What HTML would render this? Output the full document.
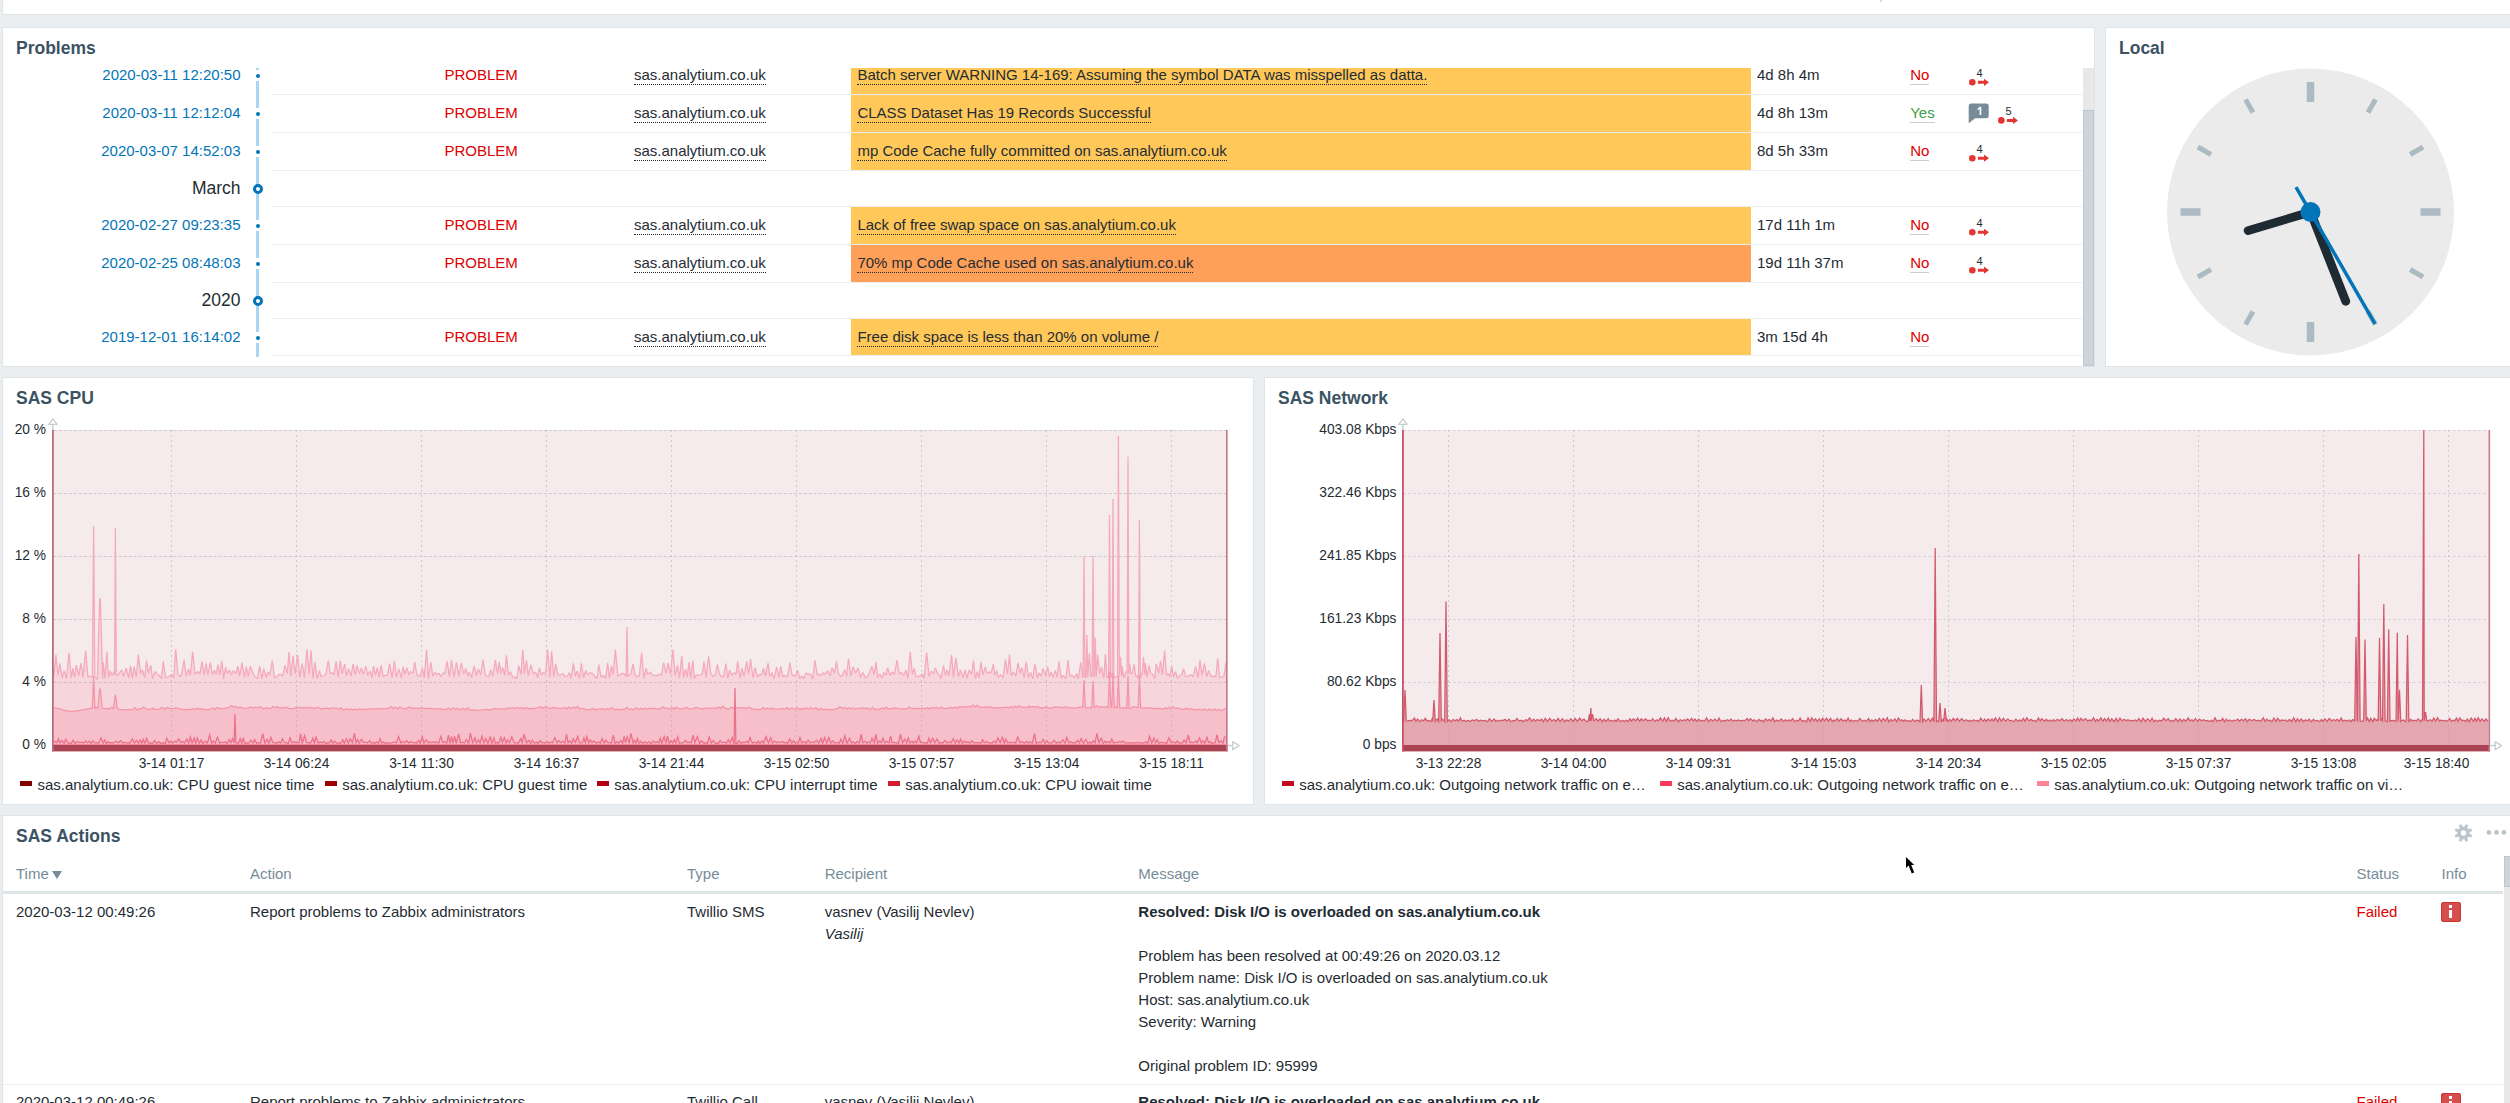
<!DOCTYPE html><html><head><meta charset="utf-8"><style>*{box-sizing:border-box}
html,body{margin:0;padding:0}
body{width:2510px;height:1103px;overflow:hidden;position:relative;background:#ebeef0;font-family:"Liberation Sans", sans-serif;color:#1f2c33;font-size:15px}
.w{position:absolute;background:#fff;border:1px solid #dfe4e7}
.t{position:absolute;white-space:nowrap;line-height:1}
.h{font-weight:bold;color:#3b5363}
.lnk{color:#0275b8}
.red{color:#dc0000}
.dot{border-bottom:1px dotted currentColor;padding-bottom:1px}
.ul{border-bottom:1px solid #c5d0d6;padding-bottom:1px}
svg.abs{position:absolute;left:0;top:0}
</style></head><body>
<div class="w" style="left:2px;top:-20px;width:2600px;height:35px"></div>
<div class="w" style="left:2px;top:27px;width:2093px;height:340px"></div>
<div class="w" style="left:2105px;top:27px;width:500px;height:340px"></div>
<div class="w" style="left:2px;top:377px;width:1252px;height:428px"></div>
<div class="w" style="left:1264px;top:377px;width:1300px;height:428px"></div>
<div class="w" style="left:2px;top:815px;width:2600px;height:400px"></div>
<div class="t h" style="left:16px;top:40.25px;font-size:17.5px;">Problems</div>
<div class="t h" style="left:2119px;top:40.25px;font-size:17.5px;">Local</div>
<div class="t h" style="left:16px;top:390.25px;font-size:17.5px;">SAS CPU</div>
<div class="t h" style="left:1278px;top:390.25px;font-size:17.5px;">SAS Network</div>
<div class="t h" style="left:16px;top:828.25px;font-size:17.5px;">SAS Actions</div>
<div style="position:absolute;left:3px;top:68px;width:2091px;height:298px;overflow:hidden"><div style="position:absolute;left:-3px;top:-68px;width:2510px;height:400px">
<div style="position:absolute;left:256px;top:50px;width:3px;height:307px;background:#a9d6f2;"></div>
<div style="position:absolute;left:271px;top:94px;width:1811px;height:1px;background:#ebeef0;"></div>
<div class="t lnk" style="left:240.5px;top:67px;font-size:15px;transform:translateX(-100%);">2020-03-11 12:20:50</div>
<div style="position:absolute;left:252.5px;top:70.4px;width:11px;height:11px;background:#fff;"></div>
<div style="position:absolute;left:256px;top:73.9px;width:4px;height:4px;background:#0275b8;border-radius:2px"></div>
<div class="t red" style="left:444.5px;top:67px;font-size:15px;">PROBLEM</div>
<div class="t " style="left:634px;top:67px;font-size:15px;"><span class="dot">sas.analytium.co.uk</span></div>
<div style="position:absolute;left:851px;top:57px;width:900px;height:37px;background:#ffc859;"></div>
<div class="t " style="left:857.4px;top:67px;font-size:15px;"><span class="dot">Batch server WARNING 14-169: Assuming the symbol DATA was misspelled as datta.</span></div>
<div class="t " style="left:1757px;top:67px;font-size:15px;">4d 8h 4m</div>
<div class="t " style="left:1910.2px;top:67px;font-size:15px;color:#dc0000"><span class="ul">No</span></div>
<div style="position:absolute;left:271px;top:132px;width:1811px;height:1px;background:#ebeef0;"></div>
<div class="t lnk" style="left:240.5px;top:105px;font-size:15px;transform:translateX(-100%);">2020-03-11 12:12:04</div>
<div style="position:absolute;left:252.5px;top:108.4px;width:11px;height:11px;background:#fff;"></div>
<div style="position:absolute;left:256px;top:111.9px;width:4px;height:4px;background:#0275b8;border-radius:2px"></div>
<div class="t red" style="left:444.5px;top:105px;font-size:15px;">PROBLEM</div>
<div class="t " style="left:634px;top:105px;font-size:15px;"><span class="dot">sas.analytium.co.uk</span></div>
<div style="position:absolute;left:851px;top:95px;width:900px;height:37px;background:#ffc859;"></div>
<div class="t " style="left:857.4px;top:105px;font-size:15px;"><span class="dot">CLASS Dataset Has 19 Records Successful</span></div>
<div class="t " style="left:1757px;top:105px;font-size:15px;">4d 8h 13m</div>
<div class="t " style="left:1910.2px;top:105px;font-size:15px;color:#429e47"><span class="ul">Yes</span></div>
<div style="position:absolute;left:271px;top:170px;width:1811px;height:1px;background:#ebeef0;"></div>
<div class="t lnk" style="left:240.5px;top:143px;font-size:15px;transform:translateX(-100%);">2020-03-07 14:52:03</div>
<div style="position:absolute;left:252.5px;top:146.4px;width:11px;height:11px;background:#fff;"></div>
<div style="position:absolute;left:256px;top:149.9px;width:4px;height:4px;background:#0275b8;border-radius:2px"></div>
<div class="t red" style="left:444.5px;top:143px;font-size:15px;">PROBLEM</div>
<div class="t " style="left:634px;top:143px;font-size:15px;"><span class="dot">sas.analytium.co.uk</span></div>
<div style="position:absolute;left:851px;top:133px;width:900px;height:37px;background:#ffc859;"></div>
<div class="t " style="left:857.4px;top:143px;font-size:15px;"><span class="dot">mp Code Cache fully committed on sas.analytium.co.uk</span></div>
<div class="t " style="left:1757px;top:143px;font-size:15px;">8d 5h 33m</div>
<div class="t " style="left:1910.2px;top:143px;font-size:15px;color:#dc0000"><span class="ul">No</span></div>
<div style="position:absolute;left:271px;top:206px;width:1811px;height:1px;background:#ebeef0;"></div>
<div class="t " style="left:240.5px;top:180.25px;font-size:17.5px;transform:translateX(-100%);">March</div>
<div style="position:absolute;left:253px;top:183.7px;width:10px;height:10px;background:#fff;border:3px solid #0275b8;border-radius:50%"></div>
<div style="position:absolute;left:271px;top:244px;width:1811px;height:1px;background:#ebeef0;"></div>
<div class="t lnk" style="left:240.5px;top:217px;font-size:15px;transform:translateX(-100%);">2020-02-27 09:23:35</div>
<div style="position:absolute;left:252.5px;top:220.4px;width:11px;height:11px;background:#fff;"></div>
<div style="position:absolute;left:256px;top:223.9px;width:4px;height:4px;background:#0275b8;border-radius:2px"></div>
<div class="t red" style="left:444.5px;top:217px;font-size:15px;">PROBLEM</div>
<div class="t " style="left:634px;top:217px;font-size:15px;"><span class="dot">sas.analytium.co.uk</span></div>
<div style="position:absolute;left:851px;top:207px;width:900px;height:37px;background:#ffc859;"></div>
<div class="t " style="left:857.4px;top:217px;font-size:15px;"><span class="dot">Lack of free swap space on sas.analytium.co.uk</span></div>
<div class="t " style="left:1757px;top:217px;font-size:15px;">17d 11h 1m</div>
<div class="t " style="left:1910.2px;top:217px;font-size:15px;color:#dc0000"><span class="ul">No</span></div>
<div style="position:absolute;left:271px;top:282px;width:1811px;height:1px;background:#ebeef0;"></div>
<div class="t lnk" style="left:240.5px;top:255px;font-size:15px;transform:translateX(-100%);">2020-02-25 08:48:03</div>
<div style="position:absolute;left:252.5px;top:258.4px;width:11px;height:11px;background:#fff;"></div>
<div style="position:absolute;left:256px;top:261.9px;width:4px;height:4px;background:#0275b8;border-radius:2px"></div>
<div class="t red" style="left:444.5px;top:255px;font-size:15px;">PROBLEM</div>
<div class="t " style="left:634px;top:255px;font-size:15px;"><span class="dot">sas.analytium.co.uk</span></div>
<div style="position:absolute;left:851px;top:245px;width:900px;height:37px;background:#ffa059;"></div>
<div class="t " style="left:857.4px;top:255px;font-size:15px;"><span class="dot">70% mp Code Cache used on sas.analytium.co.uk</span></div>
<div class="t " style="left:1757px;top:255px;font-size:15px;">19d 11h 37m</div>
<div class="t " style="left:1910.2px;top:255px;font-size:15px;color:#dc0000"><span class="ul">No</span></div>
<div style="position:absolute;left:271px;top:318px;width:1811px;height:1px;background:#ebeef0;"></div>
<div class="t " style="left:240.5px;top:292.25px;font-size:17.5px;transform:translateX(-100%);">2020</div>
<div style="position:absolute;left:253px;top:295.7px;width:10px;height:10px;background:#fff;border:3px solid #0275b8;border-radius:50%"></div>
<div style="position:absolute;left:271px;top:355px;width:1811px;height:1px;background:#ebeef0;"></div>
<div class="t lnk" style="left:240.5px;top:329px;font-size:15px;transform:translateX(-100%);">2019-12-01 16:14:02</div>
<div style="position:absolute;left:252.5px;top:332.4px;width:11px;height:11px;background:#fff;"></div>
<div style="position:absolute;left:256px;top:335.9px;width:4px;height:4px;background:#0275b8;border-radius:2px"></div>
<div class="t red" style="left:444.5px;top:329px;font-size:15px;">PROBLEM</div>
<div class="t " style="left:634px;top:329px;font-size:15px;"><span class="dot">sas.analytium.co.uk</span></div>
<div style="position:absolute;left:851px;top:319px;width:900px;height:36px;background:#ffc859;"></div>
<div class="t " style="left:857.4px;top:329px;font-size:15px;"><span class="dot">Free disk space is less than 20% on volume /</span></div>
<div class="t " style="left:1757px;top:329px;font-size:15px;">3m 15d 4h</div>
<div class="t " style="left:1910.2px;top:329px;font-size:15px;color:#dc0000"><span class="ul">No</span></div>
<svg class="abs" width="2510" height="400">
<circle cx="1972.3" cy="82.3" r="3.3" fill="#e33734"/><path d="M1977.9 80.8 H1984 V78.7 L1989 82.3 L1984 85.9 V83.8 H1977.9 Z" fill="#e33734"/><text x="1979.5" y="76.7" style="font-family:&quot;Liberation Sans&quot;" font-size="11" text-anchor="middle" fill="#1f2c33">4</text>
<path d="M1971.2 103.4 H1986.2 Q1988.7 103.4 1988.7 105.9 V115.7 Q1988.7 118.2 1986.2 118.2 H1975.2 L1968.7 123.2 V105.9 Q1968.7 103.4 1971.2 103.4 Z" fill="#768d99"/><path d="M1979.6 106.7 H1981.3 V114.9 H1979.6 V109 L1977.5 110.3 V108.9 Z" fill="#fff"/>
<circle cx="2001.3" cy="120.4" r="3.3" fill="#e33734"/><path d="M2006.9 118.9 H2013 V116.8 L2018 120.4 L2013 124 V121.9 H2006.9 Z" fill="#e33734"/><text x="2008.5" y="114.8" style="font-family:&quot;Liberation Sans&quot;" font-size="11" text-anchor="middle" fill="#1f2c33">5</text>
<circle cx="1972.3" cy="158.2" r="3.3" fill="#e33734"/><path d="M1977.9 156.7 H1984 V154.6 L1989 158.2 L1984 161.8 V159.7 H1977.9 Z" fill="#e33734"/><text x="1979.5" y="152.6" style="font-family:&quot;Liberation Sans&quot;" font-size="11" text-anchor="middle" fill="#1f2c33">4</text>
<circle cx="1972.3" cy="232.3" r="3.3" fill="#e33734"/><path d="M1977.9 230.8 H1984 V228.7 L1989 232.3 L1984 235.9 V233.8 H1977.9 Z" fill="#e33734"/><text x="1979.5" y="226.7" style="font-family:&quot;Liberation Sans&quot;" font-size="11" text-anchor="middle" fill="#1f2c33">4</text>
<circle cx="1972.3" cy="270.2" r="3.3" fill="#e33734"/><path d="M1977.9 268.7 H1984 V266.6 L1989 270.2 L1984 273.8 V271.7 H1977.9 Z" fill="#e33734"/><text x="1979.5" y="264.6" style="font-family:&quot;Liberation Sans&quot;" font-size="11" text-anchor="middle" fill="#1f2c33">4</text>
</svg>
<div style="position:absolute;left:2083px;top:68px;width:11px;height:300px;background:#e8e8e8;"></div>
<div style="position:absolute;left:2083px;top:110px;width:11px;height:256px;background:#cdd5da;border:1px solid #bdc7cd"></div>
</div></div>
<svg class="abs" width="2510" height="1103">
<circle cx="2310.5" cy="212" r="143.5" fill="#ebebeb"/>
<line x1="2310.5" y1="102" x2="2310.5" y2="82" stroke="#acbbc3" stroke-width="7.5"/>
<line x1="2368" y1="112.41" x2="2375.5" y2="99.42" stroke="#acbbc3" stroke-width="5"/>
<line x1="2410.09" y1="154.5" x2="2423.08" y2="147" stroke="#acbbc3" stroke-width="5"/>
<line x1="2420.5" y1="212" x2="2440.5" y2="212" stroke="#acbbc3" stroke-width="7.5"/>
<line x1="2410.09" y1="269.5" x2="2423.08" y2="277" stroke="#acbbc3" stroke-width="5"/>
<line x1="2368" y1="311.59" x2="2375.5" y2="324.58" stroke="#acbbc3" stroke-width="5"/>
<line x1="2310.5" y1="322" x2="2310.5" y2="342" stroke="#acbbc3" stroke-width="7.5"/>
<line x1="2253" y1="311.59" x2="2245.5" y2="324.58" stroke="#acbbc3" stroke-width="5"/>
<line x1="2210.91" y1="269.5" x2="2197.92" y2="277" stroke="#acbbc3" stroke-width="5"/>
<line x1="2200.5" y1="212" x2="2180.5" y2="212" stroke="#acbbc3" stroke-width="7.5"/>
<line x1="2210.91" y1="154.5" x2="2197.92" y2="147" stroke="#acbbc3" stroke-width="5"/>
<line x1="2253" y1="112.41" x2="2245.5" y2="99.42" stroke="#acbbc3" stroke-width="5"/>
<line x1="2310.5" y1="212" x2="2248.1" y2="230.6" stroke="#1f2b33" stroke-width="8.75" stroke-linecap="round"/>
<line x1="2310.5" y1="212" x2="2345.8" y2="301.3" stroke="#1f2b33" stroke-width="8.75" stroke-linecap="round"/>
<line x1="2296" y1="187.1" x2="2375" y2="323.8" stroke="#0275b8" stroke-width="3.5"/>
<circle cx="2310.5" cy="212" r="10" fill="#0275b8"/>
<rect x="53.8" y="430" width="1172.4" height="315" fill="#f5eaec"/>
<path d="M53.8 745 L53.8 676.29 L55.96 654.88 L58.07 675.48 L59.85 663.33 L62.25 678.44 L64.15 670.52 L66.44 678.75 L69.02 652.81 L71.24 678.06 L72.85 668.46 L74.65 677.55 L76.28 665.04 L78.72 675.89 L80.96 663.04 L83.02 677.33 L85.61 650.76 L87.92 677.11 L89.75 676.44 L92.12 676.6 L92.4 676.6 L93.6 526 L94.8 676.6 L97.01 679 L97.4 679 L98.83 626.35 L99.61 601.24 L100 598 L100.39 601.24 L101.17 626.35 L102.6 679 L103.07 661.99 L104.94 678.48 L106.88 651.66 L108.59 677.52 L110.3 670.62 L112.07 675.64 L114.12 671.14 L114.5 675.3 L115.4 528 L116.3 675.3 L117.57 675.3 L119.44 673.17 L121.84 669.92 L123.65 676.63 L126.11 668.1 L128.7 677.72 L130.55 666.04 L132.45 678.56 L134.14 666.81 L136.34 676.77 L138.39 654.68 L140.57 673.8 L142.35 669.73 L144.77 677.5 L146.56 660.54 L148.36 673.3 L150.84 665.21 L152.54 678.77 L155.1 671.36 L156.96 674.06 L159.16 675.6 L161.48 678.59 L163.31 661.33 L165.52 677.32 L168.04 676.87 L169.91 676.33 L171.57 674.05 L173.74 678.21 L175.7 649.21 L177.96 674.85 L180.14 676.72 L181.76 673.54 L184.06 659.77 L186.3 676.11 L188.63 669.01 L190.3 675.72 L192.64 651.89 L194.95 674.24 L197.46 671.52 L199.96 673.77 L201.98 661.23 L204.15 675.25 L206.13 663.52 L207.81 675.16 L210.41 662.45 L212.4 674.59 L214.58 670.29 L216.26 674.5 L217.89 664.67 L219.72 674.81 L221.82 660.72 L223.67 678.93 L225.57 667.18 L227.34 673.57 L229.6 669.87 L231.53 675 L233.33 670.55 L235.84 673.72 L237.83 666.15 L239.56 676.02 L242 662.6 L244.55 677.34 L246.32 666.52 L248.13 676.52 L250.36 666.16 L252.8 673.11 L254.85 676.75 L257.32 678.75 L259.63 666.22 L262.02 678.89 L263.76 668.78 L266.19 677.58 L267.93 671.97 L269.98 675.22 L272.23 660.37 L274.52 677.8 L276.59 676.91 L278.66 674.71 L280.44 674.23 L282.74 675.88 L284.96 665.46 L287.35 673.56 L289.03 652.05 L290.76 676.28 L292.99 655.86 L295.16 673.72 L297.56 654.9 L299.81 677.77 L302.13 663.23 L304.45 677.72 L306.95 649.25 L309.08 674.26 L311 650.59 L312.95 678.5 L314.99 662.09 L317.08 678.83 L319.49 670.6 L321.26 676.99 L323.65 675.81 L325.77 674.66 L328.21 660.49 L330.3 673.31 L331.99 672.79 L333.88 674.63 L336.11 661.41 L338.27 677.13 L340.26 660.9 L342.06 673.9 L344.63 663.84 L346.43 675.78 L348.54 668.75 L351.11 675.9 L353.11 663.93 L355.2 674.85 L356.86 665.28 L359.42 673.46 L361.29 667.86 L363.32 674.11 L365.82 666.15 L367.62 675.29 L370.14 670.77 L371.76 677.84 L373.59 666.1 L375.55 675.28 L377.25 667.89 L379.36 677.5 L381.16 665.07 L383.14 676.52 L385.26 675.37 L387.5 675.17 L389.63 663.49 L392.08 677.6 L394.42 660.88 L396.34 677.11 L398.86 669.01 L401.35 678.2 L403.19 666.66 L404.89 674.01 L406.91 667.87 L408.91 674.89 L410.53 671.54 L413.04 673.19 L414.75 662.18 L416.86 674.89 L418.65 676.15 L420.28 675.69 L422.4 667.68 L424.18 677.78 L426.62 649.8 L428.32 678.63 L430.87 662.12 L432.8 676.2 L434.91 672.19 L436.53 674.79 L438.97 673.37 L441.31 676.57 L443.1 672.9 L444.72 673.64 L447.12 661.25 L449.35 676.57 L451.55 660.16 L453.95 677.45 L456.47 662 L458.88 676.57 L461.38 662.75 L463.74 674.41 L465.75 668.37 L467.69 676.19 L469.3 671.89 L471.53 677.61 L474.07 665.96 L476.33 675.58 L478.46 669 L480.71 674.79 L483.07 659.75 L485.28 674.57 L487.14 676.6 L488.94 676.75 L490.63 669.75 L492.78 675.95 L495.35 660.04 L497.59 674.14 L499.27 662.17 L500.91 673.42 L502.67 667.48 L504.77 675.33 L506.42 655.37 L508.55 675.41 L510.52 671.76 L512.68 677.3 L514.99 676.89 L516.84 678.74 L518.6 665.49 L521.09 674.51 L522.74 649.61 L524.42 673.57 L526.45 660.24 L528.29 675.86 L530.83 664.78 L533.41 674.1 L535.61 672.01 L537.67 677.78 L539.32 667.88 L541.36 674.99 L543.42 672.34 L545.44 674.33 L547.57 649.52 L549.9 677.57 L551.61 651.37 L553.84 676.84 L555.71 663.92 L557.9 675.2 L560.26 675.01 L562.84 673.51 L565.31 676.51 L567.19 676.45 L569.41 672.67 L571.08 678.48 L573.36 663.32 L575.33 676.13 L577.14 671.04 L579.58 678.55 L581.3 663.39 L583.67 677.72 L585.69 670.52 L587.66 675.08 L590.25 672.61 L592.6 673.48 L594.62 676.22 L597.1 678.53 L598.78 664.64 L601.07 677.21 L603.44 675.29 L605.71 678.51 L607.61 662.75 L609.49 678.14 L611.45 665.7 L613.17 674.74 L615.34 649.66 L617.85 676.37 L620.25 674.46 L622.25 673.39 L624.75 674.11 L626.1 676.82 L627 627 L627.9 676.82 L628.71 675.44 L630.87 674.22 L633.01 663.93 L634.79 674.45 L637.27 676.82 L639.39 675.74 L641.55 652.84 L643.96 678.62 L646.11 668.24 L647.79 674.58 L650.29 671.93 L652.03 674.53 L654.28 675.24 L656.64 675.87 L659.01 674.3 L661.58 674.97 L663.67 662.51 L665.98 673.51 L667.99 663 L670.44 674.16 L672.88 649.46 L675.12 675.86 L677.43 665.21 L679.45 678.12 L681.79 655.87 L683.56 677.77 L685.58 669.24 L687.24 677.15 L688.96 662.02 L690.74 678.63 L692.79 660.82 L694.43 678.35 L696.21 675.12 L698.53 675.43 L700.36 674.75 L702.13 674.45 L704.04 661.65 L706.12 677.44 L708.61 656.24 L710.75 673.26 L712.84 676.6 L715.38 674.19 L717.37 664.36 L719.24 673.06 L721.5 676.91 L723.57 676.77 L725.97 663.55 L727.73 678.06 L729.65 670.05 L731.77 675.18 L734.36 672.72 L736.11 674.38 L737.71 661.38 L740.13 678.51 L742 668.13 L744.08 676.19 L746.64 661.28 L748.54 674.26 L750.56 659 L752.99 677.75 L755.13 667.58 L757.56 677.13 L759.47 674.55 L761.54 674.71 L763.5 668.05 L765.49 676.23 L768.06 663.11 L769.67 676.74 L771.98 672.49 L774.04 678.94 L776.63 667.14 L778.85 677.26 L780.82 666.32 L782.76 676.65 L785.03 675.4 L787.36 677.02 L789.9 662.49 L791.84 674.04 L793.53 676.24 L795.81 674.75 L797.59 670.3 L799.78 678.46 L801.61 676.01 L803.61 678.56 L806.13 672.91 L808.38 674.4 L810.8 674.35 L812.81 678.91 L814.81 660.16 L817.2 675.04 L819.41 674.35 L821.35 675.1 L823.06 672.93 L825.45 674.05 L827.66 670.87 L830.16 675.71 L832.12 667.72 L834.43 673.08 L836.55 661.48 L838.34 673.33 L840.57 676.33 L842.41 675.54 L844.71 669.57 L846.67 676.22 L848.4 658.51 L850.9 675.74 L853.06 666.62 L855.57 673.05 L857.99 667.9 L860.41 677.27 L862.91 672.41 L865.34 677.89 L867.49 676.74 L869.27 673.08 L871.81 666.23 L874.08 674.57 L876.06 661.77 L877.68 677.8 L879.75 673.91 L881.92 677.96 L884.04 672.46 L885.97 675.15 L887.61 667.7 L890.16 675.4 L892.23 672.01 L894.52 674.45 L896.88 660.05 L899.31 673.87 L901.32 672.47 L903.83 675.84 L905.95 669.77 L907.87 678.67 L910.2 651.95 L912.4 674.49 L914.3 668.37 L916.03 676.32 L918.13 676.58 L920.42 675.84 L922.26 673.84 L924.1 678.59 L926.61 652.68 L929.08 676.47 L931.48 671.03 L933.65 673.58 L935.35 667.89 L937.48 673.29 L939.09 674.61 L941.01 678.62 L943.51 665.42 L945.46 675.49 L947.11 669.81 L949.02 676.01 L951.55 654.8 L953.36 677.23 L955.88 657.85 L958.32 676.88 L960.39 669.96 L962.98 677.79 L965.22 669.96 L966.87 678.36 L969.19 669.8 L971.66 674.72 L973.4 660.56 L975.44 678.53 L977.27 671.32 L979.06 677.91 L980.9 661.89 L982.87 675.03 L985.35 666.94 L987.25 673.44 L989.52 671.88 L991.21 673.1 L993.25 664.22 L994.9 675.4 L996.78 670.57 L998.47 677.29 L1000.83 674.77 L1002.97 677.88 L1005.47 659.63 L1007.53 674.5 L1009.52 654.5 L1011.3 675.66 L1013.54 671.73 L1015.92 675.9 L1018.03 662.84 L1020.15 673.29 L1021.92 667.51 L1024.13 677.59 L1026.17 661.92 L1028.56 677.58 L1030.65 672.36 L1032.75 678.79 L1034.95 663.85 L1037.42 677.92 L1039.17 673.03 L1041.21 676.35 L1043.07 668.35 L1045.58 675.59 L1047.72 666.86 L1049.47 677.13 L1051.11 672.03 L1053.24 677.41 L1055.42 670.44 L1057.2 677.47 L1058.96 661.52 L1061.34 678.63 L1063.35 675.27 L1065.92 678.75 L1068.01 660.12 L1069.76 676.27 L1072.1 675.08 L1074.59 678.15 L1076.59 673.6 L1078.26 678.79 L1080.86 662.39 L1082.69 677.48 L1083.1 677.48 L1084 556 L1084.9 677.48 L1086 677.48 L1086.9 635 L1087.8 677.48 L1089.31 653.28 L1090.95 676.58 L1092.1 676.58 L1093 556 L1093.9 676.58 L1094.4 676.58 L1095.3 637.7 L1096.2 676.58 L1097.68 654.91 L1099.68 673.94 L1101.66 667.06 L1103.61 677.9 L1103.9 677.9 L1105.4 654 L1106.9 677.9 L1107.57 676.19 L1108.6 677.9 L1109.5 515 L1110.4 677.9 L1111.76 673.82 L1112.1 677.9 L1113 499 L1113.9 677.9 L1115.85 676.82 L1117.5 676.82 L1118.4 436 L1119.3 676.82 L1120.5 656.7 L1121.7 676.82 L1122.11 666.58 L1124.08 678.08 L1126.61 670.87 L1127.1 673.92 L1128 456.7 L1128.8 673.92 L1129.8 663.5 L1130.8 673.92 L1132.24 673.71 L1134.16 664.33 L1135.82 676.64 L1137.66 675.79 L1138.5 678.81 L1139.4 520 L1140.3 678.81 L1141.77 672.65 L1142.2 674.76 L1143.5 656.7 L1144.8 674.76 L1145.36 663 L1147.11 677.77 L1148.99 665.35 L1150.98 673.8 L1152.8 674.24 L1154.62 678.76 L1156.24 663.91 L1158.65 673.15 L1160.55 660.73 L1162.36 674.86 L1164.63 650.45 L1166.47 675.2 L1168.16 673.86 L1169.82 676.7 L1171.74 666.48 L1173.5 676.59 L1175.58 671.68 L1177.42 678.44 L1179.36 675.79 L1181.54 674.79 L1183.7 668.79 L1185.69 676.81 L1187.35 676.56 L1189.45 675.48 L1191.51 674.97 L1193.14 676.92 L1195.63 666.64 L1197.9 677.88 L1199.97 660.41 L1201.93 675.54 L1204.47 663.35 L1206.69 676.53 L1208.71 670.36 L1211.19 676.71 L1213.7 675.91 L1215.8 677.15 L1217.77 658.35 L1219.56 677.63 L1221.84 676.99 L1223.98 676.64 L1225.82 663.15 L1226.2 663.15 L1226.2 745 Z" fill="#f6d6dc"/>
<path d="M53.8 745 L53.8 708.24 L56.57 708.19 L59.26 708.69 L62.02 709.84 L64.44 710.29 L66.99 710.79 L69.04 711.15 L70.9 711.33 L73.41 711.12 L75.37 710.76 L77.22 711.01 L79.74 710.45 L81.87 709.99 L84.23 709.58 L86.66 709.23 L89.13 708.7 L90.94 708.21 L92.3 708.21 L93.6 676 L94.9 708.21 L95.86 707.27 L97.8 708.4 L99.01 695.79 L99.67 689.78 L100 689 L100.33 689.78 L100.99 695.79 L102.2 708.4 L102.42 708.4 L104.55 708.74 L106.72 708.41 L109.32 708.97 L111.74 707.32 L113.6 708.64 L114.59 700.1 L115.13 696.03 L115.4 695.5 L115.67 696.03 L116.21 700.1 L117.2 708.64 L119.1 709.33 L121.39 709.61 L123.51 710.11 L125.93 709.58 L127.96 709.69 L129.81 709.7 L132.51 709.64 L134.79 707.63 L136.79 709.75 L139.4 708.84 L141.26 708.9 L143.33 707.07 L146 708.94 L148.52 709.02 L150.35 709.41 L152.51 707.9 L154.62 709.36 L157.38 709.43 L159.7 709.18 L161.9 707.35 L164.53 709.15 L167.28 707.48 L169.79 708.39 L172.16 708.55 L174.35 708.28 L176.52 707.68 L178.67 708.77 L180.57 708.84 L183.11 709.33 L185.59 709.69 L187.49 709.94 L189.3 709.24 L191.51 709.55 L193.51 708.45 L195.63 709.73 L197.86 708 L199.88 709.58 L201.95 708.41 L204.7 709.56 L207.49 709.57 L209.93 709.43 L212.34 707.86 L215 709.2 L216.91 707.42 L219.4 708.6 L221.59 708.47 L223.99 708.65 L226.42 707.55 L228.81 707.92 L231.08 705.51 L233.62 706.99 L235.82 706.17 L237.74 708.32 L240.38 707.03 L243.12 708.43 L245.92 708.16 L248.59 707.8 L250.84 706.93 L253.51 707.84 L255.38 707.26 L257.97 707.82 L260.62 706.65 L262.97 708.71 L265.14 708.31 L266.97 707.73 L268.89 708.34 L271.08 708.44 L272.95 706.49 L274.96 707.84 L276.96 706.42 L279.19 708.01 L281.62 707.66 L284.02 708.17 L286.51 707.09 L288.44 708.3 L290.6 708.7 L293.39 708.74 L295.5 707.63 L297.45 707.85 L299.66 707.15 L301.97 708.02 L304 707.11 L306.09 708.06 L308.56 707.43 L311.3 707.74 L313.54 708.31 L315.76 707.84 L317.86 707.22 L320.33 708.69 L323.02 708.52 L325.25 708.27 L327.64 708.04 L329.54 709.1 L331.71 707.64 L334.18 708.31 L336 708 L338.27 708.98 L340.74 708.07 L343.51 710.03 L346.14 708.64 L348.64 709.85 L350.84 708.62 L352.86 709.99 L354.8 709.27 L357.35 709.84 L359.77 708.62 L361.82 709.9 L363.74 708.84 L365.56 709.72 L367.38 708.89 L369.72 709.02 L371.82 708.33 L373.74 709.23 L376.06 708.56 L378.63 709.17 L380.65 708.49 L383.01 708.86 L385.66 708.73 L388.43 708.41 L391.09 706.62 L393.31 708.43 L395.84 707.37 L397.8 708.81 L399.9 706.74 L402.34 708.67 L404.22 708.28 L406.13 708.79 L408.59 707.01 L411.33 708.11 L413.53 707.87 L416.07 708.28 L418.34 708.05 L420.57 708.26 L422.44 707.64 L424.78 708.58 L426.96 708.09 L429.24 708.56 L431.05 708.43 L433.81 709.12 L435.98 708.36 L438.15 709.17 L440.26 708.77 L442.58 709.77 L444.63 709.09 L447.23 708.91 L449.31 707.9 L451.2 709.71 L453.32 708.01 L455.9 709.25 L457.75 708.22 L460.1 709.92 L462.84 708.05 L465.22 709.89 L467.7 707.93 L470.42 710.22 L472.97 709.81 L475.21 710.23 L477.75 710.25 L479.67 710.22 L481.58 709.85 L483.69 709.85 L485.7 709.31 L488.04 709.72 L490.31 709.99 L492.54 709.14 L494.83 708.44 L497.02 709.49 L498.99 708.47 L500.99 709.41 L503.38 708.59 L505.57 708.99 L507.95 707.89 L510.74 708.6 L512.8 707.54 L515.17 708.64 L517.35 707.65 L519.58 708.36 L522.29 707.7 L524.58 708.72 L526.68 707.4 L528.52 708.8 L530.65 708.44 L533.4 708.77 L535.99 707.85 L537.99 707.91 L540.55 706.66 L543.25 708.17 L546 706.63 L548.09 708.38 L550.14 708.16 L552.48 708.09 L554.41 707.45 L556.48 708.18 L559.16 708.39 L561.82 708.67 L564.35 707.51 L566.81 708.97 L568.67 706.82 L570.83 708.67 L573 707.13 L575.74 708.17 L577.77 706.31 L579.68 708.78 L582.39 708.45 L584.75 709.13 L587.42 709.75 L589.89 709.56 L592.67 708.38 L595.33 709.87 L597.66 709.13 L599.98 709.19 L602.49 708.64 L604.77 709.48 L607.55 708.7 L609.48 709.38 L612.22 707.86 L614.97 709.9 L616.79 709.06 L619.18 709.56 L621.91 709.33 L624.23 709.49 L626.9 707.41 L628.73 709.6 L631.05 708.79 L633.6 709.98 L636.2 707.81 L638.83 709.49 L640.65 708.11 L642.71 709.26 L645.18 708.26 L647.22 709.29 L649.27 708.19 L651.85 708.73 L653.91 708.15 L655.97 709.28 L658.07 708.54 L660.6 708.7 L662.48 706.89 L664.52 708.06 L666.69 708.18 L669.4 709.16 L671.99 707.49 L674.13 709.1 L676.52 707.36 L678.8 708.71 L680.98 708.82 L683.69 708.56 L686.45 707.19 L688.6 708.94 L691.34 708.86 L693.28 708.58 L696.03 707.48 L698.2 708.11 L700.07 708.44 L702.22 708.97 L704.14 708 L706.48 708.39 L709.23 708.34 L711.25 708.31 L713.98 707.78 L715.94 708.54 L718.53 706.91 L720.79 708.33 L722.78 706.22 L725.56 708.57 L727.41 708.54 L729.38 708.87 L731.4 706.93 L733.7 708.42 L735 706 L736.3 708.42 L737.36 708.08 L739.63 707.35 L741.75 708.02 L743.96 707.68 L746.22 708.42 L748.96 707.26 L751.64 708.71 L753.73 709.2 L756.25 709.49 L759 709.31 L760.9 709.45 L763.2 707.47 L765.51 709.17 L767.58 708.19 L770.01 709.01 L772.29 707.91 L775.06 709.2 L777.66 709.02 L780.29 709.04 L782.6 708.4 L784.95 709.34 L787.04 707.64 L789.35 709.24 L791.98 707.74 L794.76 709.38 L797.27 707.81 L799.87 709.62 L801.92 708.21 L803.74 709.43 L806.15 707.84 L808.88 709.33 L810.79 707.46 L813.46 709.1 L816.02 707.49 L818.44 709.92 L821.11 708.54 L823.7 709.86 L826.13 709.01 L828.32 709.9 L830.92 709.5 L833.37 709.71 L835.48 708.93 L837.47 708.68 L839.6 706.85 L842.31 708.35 L845.08 707.71 L847.21 709.03 L849.05 707.75 L851.38 709 L853.38 707.95 L855.42 709.13 L857.58 708.09 L860.33 708.81 L862.36 707.78 L865.12 708.64 L867.68 708.04 L870.12 709.66 L872.46 707.35 L874.79 709.66 L876.74 708.9 L878.82 709.78 L881.38 708.04 L883.89 709.09 L886.16 707.13 L888.85 709.16 L891.35 708.38 L893.27 708.54 L895.48 707.73 L897.96 708.66 L899.89 708.9 L902.16 708.9 L904.43 708.9 L907.18 708.97 L909.3 706.88 L911.22 708.46 L913.53 708.27 L915.73 708.85 L918.23 708.18 L920.4 708.68 L922.82 708.09 L924.93 708.76 L927.61 707.73 L929.78 708.9 L931.98 707.41 L934.53 708.19 L936.98 707.74 L939.22 708.62 L941.56 706.75 L943.7 708.65 L946.26 708.29 L948.68 708.32 L950.67 707.19 L952.53 708.23 L954.72 707.18 L957.24 708.2 L959.29 706.54 L961.65 707.25 L964.23 706.47 L966.76 707.15 L969.09 706.41 L971.05 706.75 L973.14 705.04 L975.36 706.88 L977.69 705.38 L980.06 707.43 L981.94 707.2 L984.43 707.5 L986.5 706.5 L988.84 707.26 L990.79 707.08 L993.46 707.91 L995.38 707.79 L997.97 707.72 L1000.47 707.78 L1003.09 707.6 L1005.59 707.18 L1008.26 707.85 L1010.51 706.62 L1012.88 707.65 L1014.9 705.95 L1016.85 707.39 L1019.08 705.84 L1021.8 707.44 L1024.3 707.09 L1026.98 707.56 L1029.01 706.11 L1030.86 707.22 L1033.2 706.4 L1035.1 707.42 L1037.5 706.23 L1039.36 707.8 L1041.34 707.7 L1043.8 707.97 L1045.89 706.81 L1048.05 707.78 L1050.11 708.14 L1052.22 707.96 L1054.87 706.92 L1057.18 707.33 L1059.6 706.94 L1062.09 707.89 L1064.4 707.14 L1066.73 707.19 L1068.75 707.63 L1070.85 707.87 L1072.94 707.96 L1075.61 708.22 L1078.15 707.29 L1080.35 707.17 L1082.7 707.39 L1084 680 L1085.3 707.39 L1087.25 707.86 L1089.92 707.66 L1091.7 707.64 L1093 681 L1094.3 707.64 L1094.66 707.36 L1097.02 705.7 L1099.26 707.51 L1101.23 706.51 L1103.93 707.25 L1106.27 706.67 L1108.2 707.32 L1109.5 671.7 L1110.8 707.32 L1111.11 707.02 L1111.7 707.32 L1113 673 L1114.3 707.32 L1115.34 707.18 L1117.1 707.92 L1118.4 676 L1119.7 707.92 L1120.33 707.92 L1122.17 708.01 L1124 707.67 L1126.27 708.16 L1126.7 708.16 L1128 675.8 L1129.3 708.16 L1131.33 707.8 L1133.7 706.6 L1136.32 707.4 L1138.1 707.57 L1139.4 675.8 L1140.7 707.57 L1142.52 708.24 L1144.56 708.11 L1147.34 707.61 L1149.77 708.45 L1151.63 707.98 L1153.81 708.95 L1156.59 708.14 L1158.72 708.64 L1160.7 708.38 L1163 709.35 L1164.99 707.51 L1166.87 709.03 L1169.14 707.23 L1171.56 708.63 L1173.41 706.77 L1175.36 708.63 L1178.03 707.89 L1179.92 708.91 L1182.64 709.33 L1184.55 709.29 L1186.55 708.11 L1188.52 709.44 L1190.47 708.69 L1192.78 709.62 L1195.19 709.4 L1197.33 710.02 L1199.52 709.15 L1202.26 710.04 L1204.43 709.04 L1207.14 710.57 L1209.69 708.99 L1212.19 710.56 L1214.84 708.93 L1216.75 710.48 L1218.92 709.51 L1221.68 710.52 L1224.47 708.88 L1226.2 708.88 L1226.2 745 Z" fill="#f7bfca"/>
<line x1="53.8" y1="430.5" x2="1226.2" y2="430.5" stroke="#98a4af" stroke-opacity="0.45" stroke-width="1" stroke-dasharray="3 2"/>
<line x1="53.8" y1="493.5" x2="1226.2" y2="493.5" stroke="#98a4af" stroke-opacity="0.45" stroke-width="1" stroke-dasharray="3 2"/>
<line x1="53.8" y1="556.5" x2="1226.2" y2="556.5" stroke="#98a4af" stroke-opacity="0.45" stroke-width="1" stroke-dasharray="3 2"/>
<line x1="53.8" y1="619.5" x2="1226.2" y2="619.5" stroke="#98a4af" stroke-opacity="0.45" stroke-width="1" stroke-dasharray="3 2"/>
<line x1="53.8" y1="682.5" x2="1226.2" y2="682.5" stroke="#98a4af" stroke-opacity="0.45" stroke-width="1" stroke-dasharray="3 2"/>
<line x1="171.5" y1="430" x2="171.5" y2="745" stroke="#98a4af" stroke-opacity="0.45" stroke-width="1" stroke-dasharray="2 3"/>
<line x1="296.5" y1="430" x2="296.5" y2="745" stroke="#98a4af" stroke-opacity="0.45" stroke-width="1" stroke-dasharray="2 3"/>
<line x1="421.5" y1="430" x2="421.5" y2="745" stroke="#98a4af" stroke-opacity="0.45" stroke-width="1" stroke-dasharray="2 3"/>
<line x1="546.5" y1="430" x2="546.5" y2="745" stroke="#98a4af" stroke-opacity="0.45" stroke-width="1" stroke-dasharray="2 3"/>
<line x1="671.5" y1="430" x2="671.5" y2="745" stroke="#98a4af" stroke-opacity="0.45" stroke-width="1" stroke-dasharray="2 3"/>
<line x1="796.5" y1="430" x2="796.5" y2="745" stroke="#98a4af" stroke-opacity="0.45" stroke-width="1" stroke-dasharray="2 3"/>
<line x1="921.5" y1="430" x2="921.5" y2="745" stroke="#98a4af" stroke-opacity="0.45" stroke-width="1" stroke-dasharray="2 3"/>
<line x1="1046.5" y1="430" x2="1046.5" y2="745" stroke="#98a4af" stroke-opacity="0.45" stroke-width="1" stroke-dasharray="2 3"/>
<line x1="1171.5" y1="430" x2="1171.5" y2="745" stroke="#98a4af" stroke-opacity="0.45" stroke-width="1" stroke-dasharray="2 3"/>
<path d="M53.8 676.29 L55.96 654.88 L58.07 675.48 L59.85 663.33 L62.25 678.44 L64.15 670.52 L66.44 678.75 L69.02 652.81 L71.24 678.06 L72.85 668.46 L74.65 677.55 L76.28 665.04 L78.72 675.89 L80.96 663.04 L83.02 677.33 L85.61 650.76 L87.92 677.11 L89.75 676.44 L92.12 676.6 L92.4 676.6 L93.6 526 L94.8 676.6 L97.01 679 L97.4 679 L98.83 626.35 L99.61 601.24 L100 598 L100.39 601.24 L101.17 626.35 L102.6 679 L103.07 661.99 L104.94 678.48 L106.88 651.66 L108.59 677.52 L110.3 670.62 L112.07 675.64 L114.12 671.14 L114.5 675.3 L115.4 528 L116.3 675.3 L117.57 675.3 L119.44 673.17 L121.84 669.92 L123.65 676.63 L126.11 668.1 L128.7 677.72 L130.55 666.04 L132.45 678.56 L134.14 666.81 L136.34 676.77 L138.39 654.68 L140.57 673.8 L142.35 669.73 L144.77 677.5 L146.56 660.54 L148.36 673.3 L150.84 665.21 L152.54 678.77 L155.1 671.36 L156.96 674.06 L159.16 675.6 L161.48 678.59 L163.31 661.33 L165.52 677.32 L168.04 676.87 L169.91 676.33 L171.57 674.05 L173.74 678.21 L175.7 649.21 L177.96 674.85 L180.14 676.72 L181.76 673.54 L184.06 659.77 L186.3 676.11 L188.63 669.01 L190.3 675.72 L192.64 651.89 L194.95 674.24 L197.46 671.52 L199.96 673.77 L201.98 661.23 L204.15 675.25 L206.13 663.52 L207.81 675.16 L210.41 662.45 L212.4 674.59 L214.58 670.29 L216.26 674.5 L217.89 664.67 L219.72 674.81 L221.82 660.72 L223.67 678.93 L225.57 667.18 L227.34 673.57 L229.6 669.87 L231.53 675 L233.33 670.55 L235.84 673.72 L237.83 666.15 L239.56 676.02 L242 662.6 L244.55 677.34 L246.32 666.52 L248.13 676.52 L250.36 666.16 L252.8 673.11 L254.85 676.75 L257.32 678.75 L259.63 666.22 L262.02 678.89 L263.76 668.78 L266.19 677.58 L267.93 671.97 L269.98 675.22 L272.23 660.37 L274.52 677.8 L276.59 676.91 L278.66 674.71 L280.44 674.23 L282.74 675.88 L284.96 665.46 L287.35 673.56 L289.03 652.05 L290.76 676.28 L292.99 655.86 L295.16 673.72 L297.56 654.9 L299.81 677.77 L302.13 663.23 L304.45 677.72 L306.95 649.25 L309.08 674.26 L311 650.59 L312.95 678.5 L314.99 662.09 L317.08 678.83 L319.49 670.6 L321.26 676.99 L323.65 675.81 L325.77 674.66 L328.21 660.49 L330.3 673.31 L331.99 672.79 L333.88 674.63 L336.11 661.41 L338.27 677.13 L340.26 660.9 L342.06 673.9 L344.63 663.84 L346.43 675.78 L348.54 668.75 L351.11 675.9 L353.11 663.93 L355.2 674.85 L356.86 665.28 L359.42 673.46 L361.29 667.86 L363.32 674.11 L365.82 666.15 L367.62 675.29 L370.14 670.77 L371.76 677.84 L373.59 666.1 L375.55 675.28 L377.25 667.89 L379.36 677.5 L381.16 665.07 L383.14 676.52 L385.26 675.37 L387.5 675.17 L389.63 663.49 L392.08 677.6 L394.42 660.88 L396.34 677.11 L398.86 669.01 L401.35 678.2 L403.19 666.66 L404.89 674.01 L406.91 667.87 L408.91 674.89 L410.53 671.54 L413.04 673.19 L414.75 662.18 L416.86 674.89 L418.65 676.15 L420.28 675.69 L422.4 667.68 L424.18 677.78 L426.62 649.8 L428.32 678.63 L430.87 662.12 L432.8 676.2 L434.91 672.19 L436.53 674.79 L438.97 673.37 L441.31 676.57 L443.1 672.9 L444.72 673.64 L447.12 661.25 L449.35 676.57 L451.55 660.16 L453.95 677.45 L456.47 662 L458.88 676.57 L461.38 662.75 L463.74 674.41 L465.75 668.37 L467.69 676.19 L469.3 671.89 L471.53 677.61 L474.07 665.96 L476.33 675.58 L478.46 669 L480.71 674.79 L483.07 659.75 L485.28 674.57 L487.14 676.6 L488.94 676.75 L490.63 669.75 L492.78 675.95 L495.35 660.04 L497.59 674.14 L499.27 662.17 L500.91 673.42 L502.67 667.48 L504.77 675.33 L506.42 655.37 L508.55 675.41 L510.52 671.76 L512.68 677.3 L514.99 676.89 L516.84 678.74 L518.6 665.49 L521.09 674.51 L522.74 649.61 L524.42 673.57 L526.45 660.24 L528.29 675.86 L530.83 664.78 L533.41 674.1 L535.61 672.01 L537.67 677.78 L539.32 667.88 L541.36 674.99 L543.42 672.34 L545.44 674.33 L547.57 649.52 L549.9 677.57 L551.61 651.37 L553.84 676.84 L555.71 663.92 L557.9 675.2 L560.26 675.01 L562.84 673.51 L565.31 676.51 L567.19 676.45 L569.41 672.67 L571.08 678.48 L573.36 663.32 L575.33 676.13 L577.14 671.04 L579.58 678.55 L581.3 663.39 L583.67 677.72 L585.69 670.52 L587.66 675.08 L590.25 672.61 L592.6 673.48 L594.62 676.22 L597.1 678.53 L598.78 664.64 L601.07 677.21 L603.44 675.29 L605.71 678.51 L607.61 662.75 L609.49 678.14 L611.45 665.7 L613.17 674.74 L615.34 649.66 L617.85 676.37 L620.25 674.46 L622.25 673.39 L624.75 674.11 L626.1 676.82 L627 627 L627.9 676.82 L628.71 675.44 L630.87 674.22 L633.01 663.93 L634.79 674.45 L637.27 676.82 L639.39 675.74 L641.55 652.84 L643.96 678.62 L646.11 668.24 L647.79 674.58 L650.29 671.93 L652.03 674.53 L654.28 675.24 L656.64 675.87 L659.01 674.3 L661.58 674.97 L663.67 662.51 L665.98 673.51 L667.99 663 L670.44 674.16 L672.88 649.46 L675.12 675.86 L677.43 665.21 L679.45 678.12 L681.79 655.87 L683.56 677.77 L685.58 669.24 L687.24 677.15 L688.96 662.02 L690.74 678.63 L692.79 660.82 L694.43 678.35 L696.21 675.12 L698.53 675.43 L700.36 674.75 L702.13 674.45 L704.04 661.65 L706.12 677.44 L708.61 656.24 L710.75 673.26 L712.84 676.6 L715.38 674.19 L717.37 664.36 L719.24 673.06 L721.5 676.91 L723.57 676.77 L725.97 663.55 L727.73 678.06 L729.65 670.05 L731.77 675.18 L734.36 672.72 L736.11 674.38 L737.71 661.38 L740.13 678.51 L742 668.13 L744.08 676.19 L746.64 661.28 L748.54 674.26 L750.56 659 L752.99 677.75 L755.13 667.58 L757.56 677.13 L759.47 674.55 L761.54 674.71 L763.5 668.05 L765.49 676.23 L768.06 663.11 L769.67 676.74 L771.98 672.49 L774.04 678.94 L776.63 667.14 L778.85 677.26 L780.82 666.32 L782.76 676.65 L785.03 675.4 L787.36 677.02 L789.9 662.49 L791.84 674.04 L793.53 676.24 L795.81 674.75 L797.59 670.3 L799.78 678.46 L801.61 676.01 L803.61 678.56 L806.13 672.91 L808.38 674.4 L810.8 674.35 L812.81 678.91 L814.81 660.16 L817.2 675.04 L819.41 674.35 L821.35 675.1 L823.06 672.93 L825.45 674.05 L827.66 670.87 L830.16 675.71 L832.12 667.72 L834.43 673.08 L836.55 661.48 L838.34 673.33 L840.57 676.33 L842.41 675.54 L844.71 669.57 L846.67 676.22 L848.4 658.51 L850.9 675.74 L853.06 666.62 L855.57 673.05 L857.99 667.9 L860.41 677.27 L862.91 672.41 L865.34 677.89 L867.49 676.74 L869.27 673.08 L871.81 666.23 L874.08 674.57 L876.06 661.77 L877.68 677.8 L879.75 673.91 L881.92 677.96 L884.04 672.46 L885.97 675.15 L887.61 667.7 L890.16 675.4 L892.23 672.01 L894.52 674.45 L896.88 660.05 L899.31 673.87 L901.32 672.47 L903.83 675.84 L905.95 669.77 L907.87 678.67 L910.2 651.95 L912.4 674.49 L914.3 668.37 L916.03 676.32 L918.13 676.58 L920.42 675.84 L922.26 673.84 L924.1 678.59 L926.61 652.68 L929.08 676.47 L931.48 671.03 L933.65 673.58 L935.35 667.89 L937.48 673.29 L939.09 674.61 L941.01 678.62 L943.51 665.42 L945.46 675.49 L947.11 669.81 L949.02 676.01 L951.55 654.8 L953.36 677.23 L955.88 657.85 L958.32 676.88 L960.39 669.96 L962.98 677.79 L965.22 669.96 L966.87 678.36 L969.19 669.8 L971.66 674.72 L973.4 660.56 L975.44 678.53 L977.27 671.32 L979.06 677.91 L980.9 661.89 L982.87 675.03 L985.35 666.94 L987.25 673.44 L989.52 671.88 L991.21 673.1 L993.25 664.22 L994.9 675.4 L996.78 670.57 L998.47 677.29 L1000.83 674.77 L1002.97 677.88 L1005.47 659.63 L1007.53 674.5 L1009.52 654.5 L1011.3 675.66 L1013.54 671.73 L1015.92 675.9 L1018.03 662.84 L1020.15 673.29 L1021.92 667.51 L1024.13 677.59 L1026.17 661.92 L1028.56 677.58 L1030.65 672.36 L1032.75 678.79 L1034.95 663.85 L1037.42 677.92 L1039.17 673.03 L1041.21 676.35 L1043.07 668.35 L1045.58 675.59 L1047.72 666.86 L1049.47 677.13 L1051.11 672.03 L1053.24 677.41 L1055.42 670.44 L1057.2 677.47 L1058.96 661.52 L1061.34 678.63 L1063.35 675.27 L1065.92 678.75 L1068.01 660.12 L1069.76 676.27 L1072.1 675.08 L1074.59 678.15 L1076.59 673.6 L1078.26 678.79 L1080.86 662.39 L1082.69 677.48 L1083.1 677.48 L1084 556 L1084.9 677.48 L1086 677.48 L1086.9 635 L1087.8 677.48 L1089.31 653.28 L1090.95 676.58 L1092.1 676.58 L1093 556 L1093.9 676.58 L1094.4 676.58 L1095.3 637.7 L1096.2 676.58 L1097.68 654.91 L1099.68 673.94 L1101.66 667.06 L1103.61 677.9 L1103.9 677.9 L1105.4 654 L1106.9 677.9 L1107.57 676.19 L1108.6 677.9 L1109.5 515 L1110.4 677.9 L1111.76 673.82 L1112.1 677.9 L1113 499 L1113.9 677.9 L1115.85 676.82 L1117.5 676.82 L1118.4 436 L1119.3 676.82 L1120.5 656.7 L1121.7 676.82 L1122.11 666.58 L1124.08 678.08 L1126.61 670.87 L1127.1 673.92 L1128 456.7 L1128.8 673.92 L1129.8 663.5 L1130.8 673.92 L1132.24 673.71 L1134.16 664.33 L1135.82 676.64 L1137.66 675.79 L1138.5 678.81 L1139.4 520 L1140.3 678.81 L1141.77 672.65 L1142.2 674.76 L1143.5 656.7 L1144.8 674.76 L1145.36 663 L1147.11 677.77 L1148.99 665.35 L1150.98 673.8 L1152.8 674.24 L1154.62 678.76 L1156.24 663.91 L1158.65 673.15 L1160.55 660.73 L1162.36 674.86 L1164.63 650.45 L1166.47 675.2 L1168.16 673.86 L1169.82 676.7 L1171.74 666.48 L1173.5 676.59 L1175.58 671.68 L1177.42 678.44 L1179.36 675.79 L1181.54 674.79 L1183.7 668.79 L1185.69 676.81 L1187.35 676.56 L1189.45 675.48 L1191.51 674.97 L1193.14 676.92 L1195.63 666.64 L1197.9 677.88 L1199.97 660.41 L1201.93 675.54 L1204.47 663.35 L1206.69 676.53 L1208.71 670.36 L1211.19 676.71 L1213.7 675.91 L1215.8 677.15 L1217.77 658.35 L1219.56 677.63 L1221.84 676.99 L1223.98 676.64 L1225.82 663.15 L1226.2 663.15" fill="none" stroke="#f5a9ba" stroke-width="1.25" stroke-linejoin="bevel"/>
<path d="M53.8 708.24 L56.57 708.19 L59.26 708.69 L62.02 709.84 L64.44 710.29 L66.99 710.79 L69.04 711.15 L70.9 711.33 L73.41 711.12 L75.37 710.76 L77.22 711.01 L79.74 710.45 L81.87 709.99 L84.23 709.58 L86.66 709.23 L89.13 708.7 L90.94 708.21 L92.3 708.21 L93.6 676 L94.9 708.21 L95.86 707.27 L97.8 708.4 L99.01 695.79 L99.67 689.78 L100 689 L100.33 689.78 L100.99 695.79 L102.2 708.4 L102.42 708.4 L104.55 708.74 L106.72 708.41 L109.32 708.97 L111.74 707.32 L113.6 708.64 L114.59 700.1 L115.13 696.03 L115.4 695.5 L115.67 696.03 L116.21 700.1 L117.2 708.64 L119.1 709.33 L121.39 709.61 L123.51 710.11 L125.93 709.58 L127.96 709.69 L129.81 709.7 L132.51 709.64 L134.79 707.63 L136.79 709.75 L139.4 708.84 L141.26 708.9 L143.33 707.07 L146 708.94 L148.52 709.02 L150.35 709.41 L152.51 707.9 L154.62 709.36 L157.38 709.43 L159.7 709.18 L161.9 707.35 L164.53 709.15 L167.28 707.48 L169.79 708.39 L172.16 708.55 L174.35 708.28 L176.52 707.68 L178.67 708.77 L180.57 708.84 L183.11 709.33 L185.59 709.69 L187.49 709.94 L189.3 709.24 L191.51 709.55 L193.51 708.45 L195.63 709.73 L197.86 708 L199.88 709.58 L201.95 708.41 L204.7 709.56 L207.49 709.57 L209.93 709.43 L212.34 707.86 L215 709.2 L216.91 707.42 L219.4 708.6 L221.59 708.47 L223.99 708.65 L226.42 707.55 L228.81 707.92 L231.08 705.51 L233.62 706.99 L235.82 706.17 L237.74 708.32 L240.38 707.03 L243.12 708.43 L245.92 708.16 L248.59 707.8 L250.84 706.93 L253.51 707.84 L255.38 707.26 L257.97 707.82 L260.62 706.65 L262.97 708.71 L265.14 708.31 L266.97 707.73 L268.89 708.34 L271.08 708.44 L272.95 706.49 L274.96 707.84 L276.96 706.42 L279.19 708.01 L281.62 707.66 L284.02 708.17 L286.51 707.09 L288.44 708.3 L290.6 708.7 L293.39 708.74 L295.5 707.63 L297.45 707.85 L299.66 707.15 L301.97 708.02 L304 707.11 L306.09 708.06 L308.56 707.43 L311.3 707.74 L313.54 708.31 L315.76 707.84 L317.86 707.22 L320.33 708.69 L323.02 708.52 L325.25 708.27 L327.64 708.04 L329.54 709.1 L331.71 707.64 L334.18 708.31 L336 708 L338.27 708.98 L340.74 708.07 L343.51 710.03 L346.14 708.64 L348.64 709.85 L350.84 708.62 L352.86 709.99 L354.8 709.27 L357.35 709.84 L359.77 708.62 L361.82 709.9 L363.74 708.84 L365.56 709.72 L367.38 708.89 L369.72 709.02 L371.82 708.33 L373.74 709.23 L376.06 708.56 L378.63 709.17 L380.65 708.49 L383.01 708.86 L385.66 708.73 L388.43 708.41 L391.09 706.62 L393.31 708.43 L395.84 707.37 L397.8 708.81 L399.9 706.74 L402.34 708.67 L404.22 708.28 L406.13 708.79 L408.59 707.01 L411.33 708.11 L413.53 707.87 L416.07 708.28 L418.34 708.05 L420.57 708.26 L422.44 707.64 L424.78 708.58 L426.96 708.09 L429.24 708.56 L431.05 708.43 L433.81 709.12 L435.98 708.36 L438.15 709.17 L440.26 708.77 L442.58 709.77 L444.63 709.09 L447.23 708.91 L449.31 707.9 L451.2 709.71 L453.32 708.01 L455.9 709.25 L457.75 708.22 L460.1 709.92 L462.84 708.05 L465.22 709.89 L467.7 707.93 L470.42 710.22 L472.97 709.81 L475.21 710.23 L477.75 710.25 L479.67 710.22 L481.58 709.85 L483.69 709.85 L485.7 709.31 L488.04 709.72 L490.31 709.99 L492.54 709.14 L494.83 708.44 L497.02 709.49 L498.99 708.47 L500.99 709.41 L503.38 708.59 L505.57 708.99 L507.95 707.89 L510.74 708.6 L512.8 707.54 L515.17 708.64 L517.35 707.65 L519.58 708.36 L522.29 707.7 L524.58 708.72 L526.68 707.4 L528.52 708.8 L530.65 708.44 L533.4 708.77 L535.99 707.85 L537.99 707.91 L540.55 706.66 L543.25 708.17 L546 706.63 L548.09 708.38 L550.14 708.16 L552.48 708.09 L554.41 707.45 L556.48 708.18 L559.16 708.39 L561.82 708.67 L564.35 707.51 L566.81 708.97 L568.67 706.82 L570.83 708.67 L573 707.13 L575.74 708.17 L577.77 706.31 L579.68 708.78 L582.39 708.45 L584.75 709.13 L587.42 709.75 L589.89 709.56 L592.67 708.38 L595.33 709.87 L597.66 709.13 L599.98 709.19 L602.49 708.64 L604.77 709.48 L607.55 708.7 L609.48 709.38 L612.22 707.86 L614.97 709.9 L616.79 709.06 L619.18 709.56 L621.91 709.33 L624.23 709.49 L626.9 707.41 L628.73 709.6 L631.05 708.79 L633.6 709.98 L636.2 707.81 L638.83 709.49 L640.65 708.11 L642.71 709.26 L645.18 708.26 L647.22 709.29 L649.27 708.19 L651.85 708.73 L653.91 708.15 L655.97 709.28 L658.07 708.54 L660.6 708.7 L662.48 706.89 L664.52 708.06 L666.69 708.18 L669.4 709.16 L671.99 707.49 L674.13 709.1 L676.52 707.36 L678.8 708.71 L680.98 708.82 L683.69 708.56 L686.45 707.19 L688.6 708.94 L691.34 708.86 L693.28 708.58 L696.03 707.48 L698.2 708.11 L700.07 708.44 L702.22 708.97 L704.14 708 L706.48 708.39 L709.23 708.34 L711.25 708.31 L713.98 707.78 L715.94 708.54 L718.53 706.91 L720.79 708.33 L722.78 706.22 L725.56 708.57 L727.41 708.54 L729.38 708.87 L731.4 706.93 L733.7 708.42 L735 706 L736.3 708.42 L737.36 708.08 L739.63 707.35 L741.75 708.02 L743.96 707.68 L746.22 708.42 L748.96 707.26 L751.64 708.71 L753.73 709.2 L756.25 709.49 L759 709.31 L760.9 709.45 L763.2 707.47 L765.51 709.17 L767.58 708.19 L770.01 709.01 L772.29 707.91 L775.06 709.2 L777.66 709.02 L780.29 709.04 L782.6 708.4 L784.95 709.34 L787.04 707.64 L789.35 709.24 L791.98 707.74 L794.76 709.38 L797.27 707.81 L799.87 709.62 L801.92 708.21 L803.74 709.43 L806.15 707.84 L808.88 709.33 L810.79 707.46 L813.46 709.1 L816.02 707.49 L818.44 709.92 L821.11 708.54 L823.7 709.86 L826.13 709.01 L828.32 709.9 L830.92 709.5 L833.37 709.71 L835.48 708.93 L837.47 708.68 L839.6 706.85 L842.31 708.35 L845.08 707.71 L847.21 709.03 L849.05 707.75 L851.38 709 L853.38 707.95 L855.42 709.13 L857.58 708.09 L860.33 708.81 L862.36 707.78 L865.12 708.64 L867.68 708.04 L870.12 709.66 L872.46 707.35 L874.79 709.66 L876.74 708.9 L878.82 709.78 L881.38 708.04 L883.89 709.09 L886.16 707.13 L888.85 709.16 L891.35 708.38 L893.27 708.54 L895.48 707.73 L897.96 708.66 L899.89 708.9 L902.16 708.9 L904.43 708.9 L907.18 708.97 L909.3 706.88 L911.22 708.46 L913.53 708.27 L915.73 708.85 L918.23 708.18 L920.4 708.68 L922.82 708.09 L924.93 708.76 L927.61 707.73 L929.78 708.9 L931.98 707.41 L934.53 708.19 L936.98 707.74 L939.22 708.62 L941.56 706.75 L943.7 708.65 L946.26 708.29 L948.68 708.32 L950.67 707.19 L952.53 708.23 L954.72 707.18 L957.24 708.2 L959.29 706.54 L961.65 707.25 L964.23 706.47 L966.76 707.15 L969.09 706.41 L971.05 706.75 L973.14 705.04 L975.36 706.88 L977.69 705.38 L980.06 707.43 L981.94 707.2 L984.43 707.5 L986.5 706.5 L988.84 707.26 L990.79 707.08 L993.46 707.91 L995.38 707.79 L997.97 707.72 L1000.47 707.78 L1003.09 707.6 L1005.59 707.18 L1008.26 707.85 L1010.51 706.62 L1012.88 707.65 L1014.9 705.95 L1016.85 707.39 L1019.08 705.84 L1021.8 707.44 L1024.3 707.09 L1026.98 707.56 L1029.01 706.11 L1030.86 707.22 L1033.2 706.4 L1035.1 707.42 L1037.5 706.23 L1039.36 707.8 L1041.34 707.7 L1043.8 707.97 L1045.89 706.81 L1048.05 707.78 L1050.11 708.14 L1052.22 707.96 L1054.87 706.92 L1057.18 707.33 L1059.6 706.94 L1062.09 707.89 L1064.4 707.14 L1066.73 707.19 L1068.75 707.63 L1070.85 707.87 L1072.94 707.96 L1075.61 708.22 L1078.15 707.29 L1080.35 707.17 L1082.7 707.39 L1084 680 L1085.3 707.39 L1087.25 707.86 L1089.92 707.66 L1091.7 707.64 L1093 681 L1094.3 707.64 L1094.66 707.36 L1097.02 705.7 L1099.26 707.51 L1101.23 706.51 L1103.93 707.25 L1106.27 706.67 L1108.2 707.32 L1109.5 671.7 L1110.8 707.32 L1111.11 707.02 L1111.7 707.32 L1113 673 L1114.3 707.32 L1115.34 707.18 L1117.1 707.92 L1118.4 676 L1119.7 707.92 L1120.33 707.92 L1122.17 708.01 L1124 707.67 L1126.27 708.16 L1126.7 708.16 L1128 675.8 L1129.3 708.16 L1131.33 707.8 L1133.7 706.6 L1136.32 707.4 L1138.1 707.57 L1139.4 675.8 L1140.7 707.57 L1142.52 708.24 L1144.56 708.11 L1147.34 707.61 L1149.77 708.45 L1151.63 707.98 L1153.81 708.95 L1156.59 708.14 L1158.72 708.64 L1160.7 708.38 L1163 709.35 L1164.99 707.51 L1166.87 709.03 L1169.14 707.23 L1171.56 708.63 L1173.41 706.77 L1175.36 708.63 L1178.03 707.89 L1179.92 708.91 L1182.64 709.33 L1184.55 709.29 L1186.55 708.11 L1188.52 709.44 L1190.47 708.69 L1192.78 709.62 L1195.19 709.4 L1197.33 710.02 L1199.52 709.15 L1202.26 710.04 L1204.43 709.04 L1207.14 710.57 L1209.69 708.99 L1212.19 710.56 L1214.84 708.93 L1216.75 710.48 L1218.92 709.51 L1221.68 710.52 L1224.47 708.88 L1226.2 708.88" fill="none" stroke="#f395a8" stroke-width="1.25"/>
<path d="M53.8 745 L53.8 742.54 L55.34 741.31 L56.88 742.72 L58.34 738.88 L60.06 742.89 L61.65 740.43 L64.04 743.24 L65.8 739.24 L68.05 743.3 L70.01 743 L71.41 743.5 L73.14 740.03 L75.18 743.43 L77.29 741.56 L79.42 742.64 L81.75 742.05 L83.55 743.19 L85.69 740.94 L87.24 742.72 L89.61 741.15 L91.17 743.46 L92.98 740.81 L94.96 742.83 L97.33 742.7 L98.76 743.04 L100.99 737.81 L103.24 743.13 L104.75 739.9 L106.38 743.47 L107.95 741.41 L109.47 742.9 L111.7 742.64 L113.77 742.77 L116.05 741.25 L118.32 742.82 L120.69 740.68 L122.72 743.03 L124.13 742.21 L126.14 742.99 L128.05 742.61 L130.05 742.82 L132.44 738.84 L134.3 742.99 L136.5 740.24 L138.39 743.1 L140.27 740 L141.71 743.1 L143.19 739.4 L144.74 743.08 L146.74 738.22 L148.44 743.13 L150.73 742.97 L153.01 743.02 L154.55 740.33 L156.69 743.44 L158.77 741.66 L160.78 743.45 L163.11 742.57 L165.29 743.39 L166.73 738.12 L169.03 742.71 L170.64 741.19 L172.51 743.2 L174.82 741.07 L176.3 742.58 L178.64 738.72 L180.77 742.6 L182.96 741.49 L184.5 742.95 L186.85 739 L188.81 743.18 L190.37 736.96 L192.11 743.08 L194.21 738.15 L195.73 743.4 L197.29 738.01 L199.34 743.14 L201.11 740.08 L203.11 743.37 L205.22 741.16 L207.39 742.89 L209.66 734.78 L211.71 743.13 L213.52 741.06 L215.27 743.15 L217.52 737.3 L219.76 743.11 L221.81 742.05 L223.31 742.7 L225.63 741.87 L227.15 743.36 L229.18 739.66 L230.84 742.74 L232.46 738.59 L234.1 743.3 L235 714 L235.9 743.3 L236.03 742.17 L238.16 743.47 L240.2 738.7 L241.79 743.38 L243.27 737.59 L244.68 743.05 L246.68 742.9 L248.5 743.15 L250.87 740.23 L253.14 742.93 L254.67 739.64 L256.62 743.4 L258.12 742.53 L260.51 742.92 L262.81 733.73 L264.85 743.03 L267.03 739.37 L268.96 743.09 L270.87 737.24 L272.84 742.71 L275.07 742.56 L276.52 743.34 L278.88 741.68 L280.74 742.94 L282.42 738.67 L284.67 742.7 L286.07 742.72 L288.35 743.43 L290.02 737.64 L292.09 743.09 L294.01 741.61 L295.66 742.82 L297.17 742.41 L299.1 742.92 L300.51 733.49 L302.29 743.34 L304.51 735.47 L306.67 742.68 L309.01 742.64 L310.57 743.27 L312.87 738.1 L314.4 743.15 L316.04 737.12 L318.21 743.06 L320.07 741.89 L321.93 742.81 L324.04 741.3 L325.58 743.45 L327.37 742.9 L328.85 743.07 L331.19 739.88 L332.91 743.13 L334.62 741.23 L336.86 743.12 L338.43 742.95 L340.6 743.27 L342.72 739.67 L344.31 743.18 L346.48 738.79 L348.33 743.14 L350.21 738.95 L352.42 742.58 L354.42 733.19 L355.99 742.51 L357.59 739.52 L359.29 743.06 L361.53 739.18 L363.83 742.63 L365.74 742.14 L367.43 743.08 L369.77 740.54 L371.24 743.25 L373.38 742.32 L374.84 743.45 L376.65 741.8 L378.62 743.21 L380.03 738.66 L381.92 743.12 L383.59 742.11 L385.29 743.39 L386.72 742.94 L389 743.14 L390.84 742.93 L392.35 742.71 L394.3 741.97 L396.45 743 L398.65 736.42 L400.77 742.83 L402.63 741.26 L404.56 742.68 L406.82 740.74 L408.83 742.9 L411.14 741.57 L412.92 742.55 L414.48 742.57 L416.64 743.01 L418.77 740.35 L420.18 743.28 L422.31 736.89 L423.99 743.42 L426.1 739.76 L428.43 742.97 L429.86 741.99 L431.37 742.61 L433.7 741.66 L435.38 742.83 L436.89 741.77 L438.76 743.06 L440.76 736.27 L443.06 742.67 L444.69 741.62 L446.73 742.89 L448.48 735.06 L449.9 743.41 L451.51 736.64 L452.95 743.26 L454.6 736.41 L456.26 743.4 L458.63 733.85 L460.5 742.75 L462.67 742.19 L464.59 742.84 L466.32 739.41 L468.69 743.29 L470.31 733.15 L472.64 742.66 L474.89 737.73 L476.36 742.77 L478.6 739.83 L480.06 742.77 L481.95 736.04 L483.79 742.82 L485.86 738.53 L487.9 743.43 L490.2 736.79 L492.06 743.29 L493.91 737.81 L495.42 743.5 L497.22 742.32 L498.84 743.08 L500.93 737.29 L502.36 742.63 L504.36 737.55 L506.12 743.16 L507.59 739.78 L509.67 742.59 L511.74 736.77 L514.1 742.69 L516.49 742.96 L518.5 742.86 L520.77 738.55 L522.17 742.67 L524.2 734.22 L526.45 742.73 L528.84 740.31 L530.64 743.49 L532.36 740.02 L534.16 743.23 L536.25 742.08 L538.04 743.38 L540.04 740.59 L541.78 742.52 L543.38 742.32 L544.79 743.2 L547.09 741.53 L549.01 743.23 L550.94 741.95 L552.63 742.68 L554.8 737.62 L557.06 742.76 L558.52 740.76 L560.76 742.51 L562.94 741.3 L564.96 742.9 L566.49 734.47 L568.16 742.52 L569.95 740.99 L571.61 743.28 L573.31 738.72 L575.37 742.59 L577.77 736.31 L579.42 742.68 L580.91 742.77 L582.41 742.55 L583.93 737.89 L585.34 742.71 L586.8 736.73 L588.69 743.05 L590.12 739.84 L592.05 742.57 L594.12 740.84 L596.23 743.17 L598.4 741.76 L600.32 743.22 L602.01 738.6 L604.18 743.13 L605.77 740.11 L607.92 742.52 L609.91 742.51 L611.36 742.89 L613.38 735.11 L615.02 743.28 L616.56 741.52 L618.38 743.13 L620.74 740.52 L622.67 743.4 L624.1 736.5 L625.55 742.8 L627.18 736.67 L629.31 743.26 L630.86 733.25 L633.19 742.96 L634.64 740.27 L636.11 743.2 L637.55 738.59 L639.03 743.14 L640.63 741.15 L642.69 743.4 L644.63 741.68 L646.83 743.24 L649.06 741.82 L651.25 743.5 L653.2 740.86 L655.55 742.81 L657.17 741.55 L658.86 742.95 L660.35 738.33 L661.8 743.38 L664.13 736.48 L665.92 742.52 L667.49 736.23 L669.1 743.5 L670.63 740.59 L672.63 743.02 L674.15 739.45 L675.68 742.91 L677.72 736.69 L679.26 743.2 L680.8 742.91 L683.07 742.82 L685.28 740.26 L687.52 742.67 L689.72 741.96 L691.18 742.74 L693.05 735.13 L694.88 742.63 L697.25 736.47 L699.57 743.23 L701.59 740.97 L703.94 742.99 L705.49 742.8 L707.35 743.42 L709.17 737.04 L711.42 743.04 L713.26 740.63 L715.23 743.09 L716.78 742.81 L718.3 743.42 L720.12 740.52 L722.13 742.63 L724.09 742.17 L726.33 742.92 L728.37 739.81 L729.97 743.07 L732.22 737.64 L733.88 743.45 L734.1 743.45 L735 688 L735.9 743.45 L737.44 743.3 L738.86 740.58 L741.13 743.35 L742.54 742.26 L744.56 742.59 L746.71 741.18 L748.39 742.74 L750.05 737.29 L752.34 743.15 L754.7 742.23 L756.75 743.19 L758.26 741.17 L759.9 743.4 L762.08 740.74 L763.75 743.14 L766.08 736.66 L768.46 742.9 L770.8 737.67 L772.52 743.12 L774.49 741.07 L776.76 742.78 L778.38 741.9 L780.22 742.65 L782.16 741.18 L784.12 742.82 L786.07 742.29 L787.6 743.06 L789.88 738.83 L791.86 742.98 L793.71 740.63 L795.2 743.27 L796.88 742.42 L798.36 742.98 L799.93 737.6 L801.95 743.02 L803.97 741.61 L806.05 743.28 L808.19 740.08 L810.2 742.95 L812.37 741.88 L814.2 742.77 L816.32 740.14 L818.71 743 L821.1 738.46 L822.59 743.48 L824.58 737.54 L826.76 743.06 L828.9 737.46 L830.85 742.83 L832.81 740.98 L834.92 743.07 L837.29 742.5 L839.2 743.14 L840.76 739.29 L842.87 743.33 L844.79 735.73 L847.05 743.49 L849.43 738.21 L851.47 743.04 L853.03 741.68 L855.3 743.39 L857.24 741.34 L859.43 742.9 L861.15 734.2 L862.83 742.95 L865.09 741.06 L866.98 743.21 L868.54 741.69 L870.36 742.9 L872.03 738.11 L874.23 742.7 L875.87 734.36 L877.6 743.25 L879.71 740.95 L881.37 742.64 L883.03 738.25 L884.83 742.92 L886.76 741.32 L889.11 742.76 L890.6 735.95 L892.05 742.68 L893.73 742.47 L895.62 742.66 L897.04 742.96 L898.5 743.18 L900.39 734.06 L902.64 742.91 L904.95 739.04 L906.72 743.02 L908.23 738.07 L909.83 743.01 L912.04 741.24 L913.53 743.26 L915.12 740.94 L916.75 742.81 L918.73 736.02 L920.47 742.5 L922.32 742.47 L923.81 742.85 L925.31 742.75 L927.25 743.3 L928.91 738.21 L930.46 742.82 L932.86 738.22 L934.79 742.8 L937.03 739.01 L939.21 743.4 L940.74 742.45 L942.7 743.22 L945.05 740.55 L947.39 743.05 L949.56 741.8 L951.08 742.84 L953.41 738.73 L955.33 743.14 L957.12 739.97 L959 742.99 L960.55 738.99 L962.35 743.25 L964.35 740.95 L966.18 742.72 L968.13 741.52 L969.78 743.2 L972.13 740.78 L973.68 742.87 L975.2 742.62 L976.63 742.59 L978.99 742.96 L981.13 742.84 L982.57 739.73 L984.2 742.72 L986.37 741.48 L988.57 742.9 L990.5 742.8 L992.09 742.98 L994.08 741.09 L996.05 742.85 L997.86 737.87 L1000.14 742.51 L1002.36 737.24 L1004.32 743.25 L1005.82 739.01 L1007.83 742.95 L1009.84 742.28 L1011.54 742.8 L1013.83 742.06 L1015.68 743.07 L1017.71 736.93 L1019.92 742.77 L1022.29 741.66 L1024.34 743.19 L1026.57 741.33 L1028.49 743.14 L1029.9 741.57 L1032.25 743.36 L1034.55 733.63 L1036.23 743.48 L1038.51 742.11 L1040.85 742.83 L1043.08 739.29 L1044.98 743.41 L1046.76 740.55 L1048.45 742.83 L1049.99 742.82 L1051.97 742.91 L1054.08 740.19 L1056.21 742.93 L1058.48 742.12 L1060.43 742.9 L1062.79 739.81 L1065.13 743.03 L1066.74 737.49 L1068.99 742.95 L1070.65 741.6 L1072.4 742.92 L1073.95 742.64 L1075.38 742.97 L1077.51 740.29 L1079.52 742.84 L1081.21 738.61 L1083.45 743.26 L1085.8 739.29 L1087.94 743.34 L1089.72 742 L1091.48 743.34 L1093.28 740.61 L1095.04 742.79 L1096.87 733.36 L1098.97 742.66 L1101.28 738.35 L1103.28 743.43 L1105.04 741.13 L1106.45 742.75 L1107.92 741.55 L1110.17 742.87 L1111.71 739.06 L1113.73 743.09 L1116.09 742.18 L1117.8 742.54 L1119.55 741.39 L1121.62 742.56 L1123.09 740.83 L1124.99 742.81 L1127.06 742.85 L1128.64 743.2 L1130.22 742.66 L1131.65 742.98 L1133.81 742.72 L1135.94 743.42 L1137.48 742.11 L1139.66 742.99 L1141.58 742.92 L1143.81 743.11 L1146.03 741.7 L1147.97 743.35 L1149.45 736.25 L1151.85 742.96 L1153.98 738.09 L1155.55 742.86 L1157.39 739.83 L1159.09 743.39 L1161.25 742.14 L1163.43 742.98 L1165.12 742.99 L1166.58 743.46 L1168.95 737.82 L1171.29 742.96 L1173.37 741.69 L1175.38 743.09 L1177.43 741.04 L1179.04 743.01 L1180.87 742.83 L1182.51 742.78 L1184.08 740.02 L1186.09 742.77 L1188.26 734.84 L1190.05 742.75 L1191.48 742.19 L1193.43 742.77 L1195.7 740.92 L1197.18 742.84 L1199.5 738.04 L1201.42 743.09 L1202.99 740.62 L1204.91 743.46 L1206.93 737.4 L1208.51 742.55 L1210.09 741.62 L1211.65 743.23 L1213.24 742.88 L1215.29 742.83 L1216.94 734.73 L1218.79 742.57 L1220.84 740.76 L1222.98 743.19 L1224.45 737.01 L1226.2 737.01 L1226.2 745 Z" fill="#f4b0bd" fill-opacity="0.6"/>
<path d="M53.8 742.54 L55.34 741.31 L56.88 742.72 L58.34 738.88 L60.06 742.89 L61.65 740.43 L64.04 743.24 L65.8 739.24 L68.05 743.3 L70.01 743 L71.41 743.5 L73.14 740.03 L75.18 743.43 L77.29 741.56 L79.42 742.64 L81.75 742.05 L83.55 743.19 L85.69 740.94 L87.24 742.72 L89.61 741.15 L91.17 743.46 L92.98 740.81 L94.96 742.83 L97.33 742.7 L98.76 743.04 L100.99 737.81 L103.24 743.13 L104.75 739.9 L106.38 743.47 L107.95 741.41 L109.47 742.9 L111.7 742.64 L113.77 742.77 L116.05 741.25 L118.32 742.82 L120.69 740.68 L122.72 743.03 L124.13 742.21 L126.14 742.99 L128.05 742.61 L130.05 742.82 L132.44 738.84 L134.3 742.99 L136.5 740.24 L138.39 743.1 L140.27 740 L141.71 743.1 L143.19 739.4 L144.74 743.08 L146.74 738.22 L148.44 743.13 L150.73 742.97 L153.01 743.02 L154.55 740.33 L156.69 743.44 L158.77 741.66 L160.78 743.45 L163.11 742.57 L165.29 743.39 L166.73 738.12 L169.03 742.71 L170.64 741.19 L172.51 743.2 L174.82 741.07 L176.3 742.58 L178.64 738.72 L180.77 742.6 L182.96 741.49 L184.5 742.95 L186.85 739 L188.81 743.18 L190.37 736.96 L192.11 743.08 L194.21 738.15 L195.73 743.4 L197.29 738.01 L199.34 743.14 L201.11 740.08 L203.11 743.37 L205.22 741.16 L207.39 742.89 L209.66 734.78 L211.71 743.13 L213.52 741.06 L215.27 743.15 L217.52 737.3 L219.76 743.11 L221.81 742.05 L223.31 742.7 L225.63 741.87 L227.15 743.36 L229.18 739.66 L230.84 742.74 L232.46 738.59 L234.1 743.3 L235 714 L235.9 743.3 L236.03 742.17 L238.16 743.47 L240.2 738.7 L241.79 743.38 L243.27 737.59 L244.68 743.05 L246.68 742.9 L248.5 743.15 L250.87 740.23 L253.14 742.93 L254.67 739.64 L256.62 743.4 L258.12 742.53 L260.51 742.92 L262.81 733.73 L264.85 743.03 L267.03 739.37 L268.96 743.09 L270.87 737.24 L272.84 742.71 L275.07 742.56 L276.52 743.34 L278.88 741.68 L280.74 742.94 L282.42 738.67 L284.67 742.7 L286.07 742.72 L288.35 743.43 L290.02 737.64 L292.09 743.09 L294.01 741.61 L295.66 742.82 L297.17 742.41 L299.1 742.92 L300.51 733.49 L302.29 743.34 L304.51 735.47 L306.67 742.68 L309.01 742.64 L310.57 743.27 L312.87 738.1 L314.4 743.15 L316.04 737.12 L318.21 743.06 L320.07 741.89 L321.93 742.81 L324.04 741.3 L325.58 743.45 L327.37 742.9 L328.85 743.07 L331.19 739.88 L332.91 743.13 L334.62 741.23 L336.86 743.12 L338.43 742.95 L340.6 743.27 L342.72 739.67 L344.31 743.18 L346.48 738.79 L348.33 743.14 L350.21 738.95 L352.42 742.58 L354.42 733.19 L355.99 742.51 L357.59 739.52 L359.29 743.06 L361.53 739.18 L363.83 742.63 L365.74 742.14 L367.43 743.08 L369.77 740.54 L371.24 743.25 L373.38 742.32 L374.84 743.45 L376.65 741.8 L378.62 743.21 L380.03 738.66 L381.92 743.12 L383.59 742.11 L385.29 743.39 L386.72 742.94 L389 743.14 L390.84 742.93 L392.35 742.71 L394.3 741.97 L396.45 743 L398.65 736.42 L400.77 742.83 L402.63 741.26 L404.56 742.68 L406.82 740.74 L408.83 742.9 L411.14 741.57 L412.92 742.55 L414.48 742.57 L416.64 743.01 L418.77 740.35 L420.18 743.28 L422.31 736.89 L423.99 743.42 L426.1 739.76 L428.43 742.97 L429.86 741.99 L431.37 742.61 L433.7 741.66 L435.38 742.83 L436.89 741.77 L438.76 743.06 L440.76 736.27 L443.06 742.67 L444.69 741.62 L446.73 742.89 L448.48 735.06 L449.9 743.41 L451.51 736.64 L452.95 743.26 L454.6 736.41 L456.26 743.4 L458.63 733.85 L460.5 742.75 L462.67 742.19 L464.59 742.84 L466.32 739.41 L468.69 743.29 L470.31 733.15 L472.64 742.66 L474.89 737.73 L476.36 742.77 L478.6 739.83 L480.06 742.77 L481.95 736.04 L483.79 742.82 L485.86 738.53 L487.9 743.43 L490.2 736.79 L492.06 743.29 L493.91 737.81 L495.42 743.5 L497.22 742.32 L498.84 743.08 L500.93 737.29 L502.36 742.63 L504.36 737.55 L506.12 743.16 L507.59 739.78 L509.67 742.59 L511.74 736.77 L514.1 742.69 L516.49 742.96 L518.5 742.86 L520.77 738.55 L522.17 742.67 L524.2 734.22 L526.45 742.73 L528.84 740.31 L530.64 743.49 L532.36 740.02 L534.16 743.23 L536.25 742.08 L538.04 743.38 L540.04 740.59 L541.78 742.52 L543.38 742.32 L544.79 743.2 L547.09 741.53 L549.01 743.23 L550.94 741.95 L552.63 742.68 L554.8 737.62 L557.06 742.76 L558.52 740.76 L560.76 742.51 L562.94 741.3 L564.96 742.9 L566.49 734.47 L568.16 742.52 L569.95 740.99 L571.61 743.28 L573.31 738.72 L575.37 742.59 L577.77 736.31 L579.42 742.68 L580.91 742.77 L582.41 742.55 L583.93 737.89 L585.34 742.71 L586.8 736.73 L588.69 743.05 L590.12 739.84 L592.05 742.57 L594.12 740.84 L596.23 743.17 L598.4 741.76 L600.32 743.22 L602.01 738.6 L604.18 743.13 L605.77 740.11 L607.92 742.52 L609.91 742.51 L611.36 742.89 L613.38 735.11 L615.02 743.28 L616.56 741.52 L618.38 743.13 L620.74 740.52 L622.67 743.4 L624.1 736.5 L625.55 742.8 L627.18 736.67 L629.31 743.26 L630.86 733.25 L633.19 742.96 L634.64 740.27 L636.11 743.2 L637.55 738.59 L639.03 743.14 L640.63 741.15 L642.69 743.4 L644.63 741.68 L646.83 743.24 L649.06 741.82 L651.25 743.5 L653.2 740.86 L655.55 742.81 L657.17 741.55 L658.86 742.95 L660.35 738.33 L661.8 743.38 L664.13 736.48 L665.92 742.52 L667.49 736.23 L669.1 743.5 L670.63 740.59 L672.63 743.02 L674.15 739.45 L675.68 742.91 L677.72 736.69 L679.26 743.2 L680.8 742.91 L683.07 742.82 L685.28 740.26 L687.52 742.67 L689.72 741.96 L691.18 742.74 L693.05 735.13 L694.88 742.63 L697.25 736.47 L699.57 743.23 L701.59 740.97 L703.94 742.99 L705.49 742.8 L707.35 743.42 L709.17 737.04 L711.42 743.04 L713.26 740.63 L715.23 743.09 L716.78 742.81 L718.3 743.42 L720.12 740.52 L722.13 742.63 L724.09 742.17 L726.33 742.92 L728.37 739.81 L729.97 743.07 L732.22 737.64 L733.88 743.45 L734.1 743.45 L735 688 L735.9 743.45 L737.44 743.3 L738.86 740.58 L741.13 743.35 L742.54 742.26 L744.56 742.59 L746.71 741.18 L748.39 742.74 L750.05 737.29 L752.34 743.15 L754.7 742.23 L756.75 743.19 L758.26 741.17 L759.9 743.4 L762.08 740.74 L763.75 743.14 L766.08 736.66 L768.46 742.9 L770.8 737.67 L772.52 743.12 L774.49 741.07 L776.76 742.78 L778.38 741.9 L780.22 742.65 L782.16 741.18 L784.12 742.82 L786.07 742.29 L787.6 743.06 L789.88 738.83 L791.86 742.98 L793.71 740.63 L795.2 743.27 L796.88 742.42 L798.36 742.98 L799.93 737.6 L801.95 743.02 L803.97 741.61 L806.05 743.28 L808.19 740.08 L810.2 742.95 L812.37 741.88 L814.2 742.77 L816.32 740.14 L818.71 743 L821.1 738.46 L822.59 743.48 L824.58 737.54 L826.76 743.06 L828.9 737.46 L830.85 742.83 L832.81 740.98 L834.92 743.07 L837.29 742.5 L839.2 743.14 L840.76 739.29 L842.87 743.33 L844.79 735.73 L847.05 743.49 L849.43 738.21 L851.47 743.04 L853.03 741.68 L855.3 743.39 L857.24 741.34 L859.43 742.9 L861.15 734.2 L862.83 742.95 L865.09 741.06 L866.98 743.21 L868.54 741.69 L870.36 742.9 L872.03 738.11 L874.23 742.7 L875.87 734.36 L877.6 743.25 L879.71 740.95 L881.37 742.64 L883.03 738.25 L884.83 742.92 L886.76 741.32 L889.11 742.76 L890.6 735.95 L892.05 742.68 L893.73 742.47 L895.62 742.66 L897.04 742.96 L898.5 743.18 L900.39 734.06 L902.64 742.91 L904.95 739.04 L906.72 743.02 L908.23 738.07 L909.83 743.01 L912.04 741.24 L913.53 743.26 L915.12 740.94 L916.75 742.81 L918.73 736.02 L920.47 742.5 L922.32 742.47 L923.81 742.85 L925.31 742.75 L927.25 743.3 L928.91 738.21 L930.46 742.82 L932.86 738.22 L934.79 742.8 L937.03 739.01 L939.21 743.4 L940.74 742.45 L942.7 743.22 L945.05 740.55 L947.39 743.05 L949.56 741.8 L951.08 742.84 L953.41 738.73 L955.33 743.14 L957.12 739.97 L959 742.99 L960.55 738.99 L962.35 743.25 L964.35 740.95 L966.18 742.72 L968.13 741.52 L969.78 743.2 L972.13 740.78 L973.68 742.87 L975.2 742.62 L976.63 742.59 L978.99 742.96 L981.13 742.84 L982.57 739.73 L984.2 742.72 L986.37 741.48 L988.57 742.9 L990.5 742.8 L992.09 742.98 L994.08 741.09 L996.05 742.85 L997.86 737.87 L1000.14 742.51 L1002.36 737.24 L1004.32 743.25 L1005.82 739.01 L1007.83 742.95 L1009.84 742.28 L1011.54 742.8 L1013.83 742.06 L1015.68 743.07 L1017.71 736.93 L1019.92 742.77 L1022.29 741.66 L1024.34 743.19 L1026.57 741.33 L1028.49 743.14 L1029.9 741.57 L1032.25 743.36 L1034.55 733.63 L1036.23 743.48 L1038.51 742.11 L1040.85 742.83 L1043.08 739.29 L1044.98 743.41 L1046.76 740.55 L1048.45 742.83 L1049.99 742.82 L1051.97 742.91 L1054.08 740.19 L1056.21 742.93 L1058.48 742.12 L1060.43 742.9 L1062.79 739.81 L1065.13 743.03 L1066.74 737.49 L1068.99 742.95 L1070.65 741.6 L1072.4 742.92 L1073.95 742.64 L1075.38 742.97 L1077.51 740.29 L1079.52 742.84 L1081.21 738.61 L1083.45 743.26 L1085.8 739.29 L1087.94 743.34 L1089.72 742 L1091.48 743.34 L1093.28 740.61 L1095.04 742.79 L1096.87 733.36 L1098.97 742.66 L1101.28 738.35 L1103.28 743.43 L1105.04 741.13 L1106.45 742.75 L1107.92 741.55 L1110.17 742.87 L1111.71 739.06 L1113.73 743.09 L1116.09 742.18 L1117.8 742.54 L1119.55 741.39 L1121.62 742.56 L1123.09 740.83 L1124.99 742.81 L1127.06 742.85 L1128.64 743.2 L1130.22 742.66 L1131.65 742.98 L1133.81 742.72 L1135.94 743.42 L1137.48 742.11 L1139.66 742.99 L1141.58 742.92 L1143.81 743.11 L1146.03 741.7 L1147.97 743.35 L1149.45 736.25 L1151.85 742.96 L1153.98 738.09 L1155.55 742.86 L1157.39 739.83 L1159.09 743.39 L1161.25 742.14 L1163.43 742.98 L1165.12 742.99 L1166.58 743.46 L1168.95 737.82 L1171.29 742.96 L1173.37 741.69 L1175.38 743.09 L1177.43 741.04 L1179.04 743.01 L1180.87 742.83 L1182.51 742.78 L1184.08 740.02 L1186.09 742.77 L1188.26 734.84 L1190.05 742.75 L1191.48 742.19 L1193.43 742.77 L1195.7 740.92 L1197.18 742.84 L1199.5 738.04 L1201.42 743.09 L1202.99 740.62 L1204.91 743.46 L1206.93 737.4 L1208.51 742.55 L1210.09 741.62 L1211.65 743.23 L1213.24 742.88 L1215.29 742.83 L1216.94 734.73 L1218.79 742.57 L1220.84 740.76 L1222.98 743.19 L1224.45 737.01 L1226.2 737.01" fill="none" stroke="#eb7088" stroke-width="1.25"/>
<rect x="52" y="744" width="1175.5" height="1.2" fill="#f2889b"/>
<rect x="52" y="745" width="1175.6" height="6.4" fill="#a94253"/>
<rect x="52" y="430" width="1.8" height="321.5" fill="#b8697a"/>
<rect x="1226" y="430" width="1.6" height="321.5" fill="#c27686"/>
<path d="M52.9 430 V424" stroke="#c5ced3" stroke-width="1.5"/>
<path d="M48.7 424.3 L52.9 418.8 L57.1 424.3 Z" fill="#fff" stroke="#c5ced3" stroke-width="1.3" stroke-linejoin="round"/>
<path d="M1227.6 745.6 H1232.6" stroke="#c5ced3" stroke-width="1.5"/>
<path d="M1232.6 741.6 L1239.1 745.6 L1232.6 749.6 Z" fill="#fff" stroke="#c5ced3" stroke-width="1.3" stroke-linejoin="round"/>
<rect x="1403.5" y="430" width="1085" height="315" fill="#f5eaec"/>
<path d="M1403.5 745 L1403.5 721.05 L1403.7 721.05 L1405 690 L1406.3 721.05 L1408.02 720.91 L1410.35 720.42 L1412.26 720.67 L1414.35 717.98 L1415.95 721.24 L1417.67 718.98 L1419.69 721.78 L1421.38 719.72 L1423.71 720.88 L1425.35 718.27 L1426.98 721.06 L1428.59 720.5 L1430.88 721.55 L1432.57 717.75 L1432.7 721.45 L1434 700 L1435.3 721.45 L1437.22 718.99 L1438.7 721.55 L1440 633 L1441.3 721.55 L1441.68 718.57 L1444.05 720.73 L1444.7 721.63 L1446 601.6 L1447.3 721.63 L1447.47 721.63 L1449.02 719.66 L1451.07 721.8 L1453.18 719.55 L1454.96 720.82 L1456.89 719.62 L1458.82 720.95 L1460.37 717.77 L1461.89 720.9 L1464.15 720.45 L1466.36 721.36 L1468.38 720.47 L1469.93 721.58 L1472.29 719.95 L1474.47 720.68 L1476.81 719.54 L1478.63 721.17 L1480.83 720.2 L1483 720.84 L1485.28 720.4 L1487.63 721.69 L1489.44 718.79 L1491.76 721.39 L1494.09 718.97 L1495.88 721.42 L1497.53 720.28 L1499.17 720.97 L1501.57 720.05 L1503.11 720.62 L1505.09 719.36 L1506.8 721.09 L1509.05 719.22 L1510.93 721.73 L1513.25 720.41 L1515.2 720.79 L1516.81 718.45 L1519.17 721.04 L1521.38 720.2 L1523.27 721.62 L1525.53 719.67 L1527.44 720.6 L1529.7 717.77 L1531.61 721.21 L1533.77 719.16 L1535.53 721.32 L1537.16 719.44 L1539.55 720.65 L1541.62 719.1 L1543.42 721.69 L1545.17 718.31 L1547.45 721.37 L1549.65 718.33 L1551.78 721 L1553.96 719.48 L1556.1 721.46 L1558.03 718.34 L1560.16 721.45 L1562.51 718.68 L1564.53 721.79 L1566.52 719.8 L1568.63 721.24 L1570.86 718.69 L1573.08 721.38 L1575.16 718.43 L1577.4 721.38 L1579.66 718.06 L1581.78 720.63 L1584.14 719.05 L1586.12 721.6 L1588.2 720.97 L1589.5 714 L1589.7 720.97 L1591 708 L1591.2 720.97 L1592.5 714 L1593.8 720.97 L1594.1 720.86 L1596.13 718.64 L1598 721.05 L1600.2 718.72 L1602.35 721.77 L1603.99 719.27 L1606.08 721.54 L1608.2 718.73 L1609.73 721.23 L1611.44 720.35 L1613.06 721.42 L1614.72 719.96 L1616.25 721.24 L1618.1 718.79 L1620.13 721.51 L1622.44 720.5 L1624.31 721.47 L1626.17 720.18 L1628.42 721.35 L1629.95 718.78 L1631.54 721.15 L1633.35 718.87 L1635.71 720.82 L1637.59 718.22 L1639.66 721.36 L1641.29 718.83 L1643.3 720.65 L1645.67 718.8 L1647.49 720.73 L1648.99 720.2 L1651 721.06 L1652.62 718.74 L1654.92 721.35 L1656.81 719.87 L1658.58 720.63 L1660.42 717.81 L1662.74 721.09 L1664.47 717.75 L1666.42 721.3 L1668.21 717.74 L1670.15 721.46 L1672.08 720.16 L1674.14 721.27 L1675.9 718.31 L1678.15 721.78 L1680.13 719.73 L1682.47 720.86 L1684.19 719.75 L1685.83 720.61 L1687.59 718.8 L1689.52 721.03 L1691.56 718.42 L1693.17 720.89 L1694.94 719.01 L1696.74 721.44 L1698.72 719.2 L1700.54 720.91 L1702.58 720.4 L1704.3 721.25 L1706.63 718.01 L1708.62 721.78 L1710.82 719.3 L1712.84 720.95 L1714.91 719.15 L1717.23 721.34 L1719.08 718.11 L1720.76 721.44 L1723 720.32 L1725.26 720.97 L1727.15 719.7 L1729.35 720.71 L1730.98 719.16 L1732.97 721.2 L1734.77 720.07 L1736.8 720.83 L1738.36 719.86 L1740.6 720.85 L1742.69 720.43 L1744.84 720.63 L1747.24 718.54 L1748.79 720.79 L1750.48 718.69 L1752.84 720.95 L1754.46 719.68 L1756.79 721.62 L1758.84 719.34 L1760.48 721.05 L1762.02 720.2 L1763.86 721.71 L1765.41 718.89 L1767.58 720.75 L1769.2 719.29 L1770.99 721.08 L1772.93 717.87 L1774.76 721.73 L1776.89 720.08 L1778.96 721.19 L1781.28 718.95 L1783.34 721.48 L1785.33 719.79 L1787.51 721.18 L1789.13 719.84 L1790.96 720.92 L1792.63 718.5 L1794.71 721.7 L1796.82 720.24 L1798.43 721.09 L1800.14 718.04 L1802.08 721.41 L1804.29 720.42 L1806.44 721.74 L1808.08 717.83 L1810.19 721.53 L1811.8 717.78 L1813.9 720.82 L1815.52 718.75 L1817.34 721.52 L1819.14 718.78 L1820.95 721.34 L1822.58 718.17 L1824.66 720.83 L1826.55 718.12 L1828.52 721.09 L1830.53 718.43 L1832.39 721.68 L1833.92 719.93 L1835.45 720.73 L1837.39 718.37 L1838.89 721.24 L1841.19 718.77 L1843.07 721.24 L1844.66 720.07 L1846.31 721.35 L1848.15 718.04 L1849.79 721.5 L1851.54 720.05 L1853.3 721.52 L1855.23 720.41 L1857.56 721.36 L1859.91 718.57 L1862.02 721.23 L1864.37 720.17 L1866.47 721.45 L1868.57 718.46 L1870.22 721.56 L1871.74 719.85 L1873.31 721.32 L1875.69 719.48 L1877.47 721.24 L1879.23 718.45 L1881.37 721.6 L1883.09 718.62 L1885.44 721.02 L1887.32 717.77 L1888.83 721.73 L1891.03 719.35 L1892.57 721.14 L1894.96 719.05 L1896.78 721.69 L1898.34 717.98 L1900.28 720.68 L1901.83 719.82 L1903.38 721.32 L1904.93 719.78 L1906.8 721.43 L1908.34 720.39 L1910.72 721.58 L1912.68 719.37 L1914.65 721.7 L1916.44 720.2 L1918.42 720.69 L1920 721.78 L1921.3 685 L1922.6 721.78 L1924.14 719.14 L1926.15 721.35 L1928.22 718.47 L1930.54 721.43 L1932.44 718.19 L1933.9 721.66 L1935.2 548 L1936.5 721.66 L1938.12 720.82 L1938.7 721.51 L1940 703 L1941.3 721.51 L1941.48 721.51 L1943.05 719.3 L1943.7 721.51 L1945 708 L1946.3 721.51 L1946.63 718.54 L1948.17 721.56 L1949.93 719.45 L1951.52 721.3 L1953.3 718.39 L1955.3 720.72 L1957.39 718.37 L1959.4 721.27 L1961.64 718.66 L1964 720.93 L1966.13 719.75 L1968.36 721.34 L1969.98 720.32 L1971.63 721.48 L1973.74 719.7 L1975.3 720.88 L1977.3 720.42 L1978.84 721.64 L1980.66 718.09 L1983.02 721.07 L1984.73 719.3 L1986.55 721.4 L1988.06 718.86 L1990.31 720.93 L1991.89 719.02 L1993.55 720.95 L1995.45 717.87 L1997.67 721.66 L1999.45 717.94 L2001.37 721.28 L2003.26 718.35 L2005.61 721.16 L2007.98 718.83 L2009.57 720.82 L2011.45 720.35 L2013.83 721.76 L2015.85 719.15 L2018.14 721.33 L2019.84 719.72 L2021.52 721.13 L2023.34 718.4 L2025.06 721.38 L2026.78 717.75 L2029.04 720.78 L2031.09 719.38 L2032.72 720.8 L2034.66 720.39 L2036.31 721.68 L2038.46 717.98 L2040.14 720.84 L2041.93 718.59 L2044.21 721.05 L2046.43 719.45 L2047.94 721.19 L2049.97 719.98 L2051.82 721.42 L2053.34 719.63 L2055.18 721.23 L2057.32 719.38 L2059.7 720.82 L2062.03 718.56 L2064.14 721.16 L2066.36 719.48 L2068.39 720.98 L2070.36 719.7 L2071.93 721.7 L2073.75 718.87 L2075.93 720.94 L2077.71 717.9 L2079.46 720.94 L2081.02 718.39 L2083.12 720.65 L2085.43 718.57 L2087.69 720.91 L2089.74 719.92 L2091.7 720.72 L2093.42 717.77 L2095.41 721.33 L2096.91 719.41 L2098.57 721.02 L2100.88 717.95 L2102.93 721.34 L2104.53 718.57 L2106.53 720.94 L2108.36 718.02 L2110.05 721.43 L2111.8 718.76 L2114.1 721.6 L2116.17 718.35 L2117.87 721.72 L2119.88 718.18 L2122.17 720.93 L2124.05 719.31 L2126.03 720.71 L2127.8 719.71 L2129.84 720.64 L2131.51 720.41 L2133.12 721.12 L2135.16 719.99 L2136.83 721.09 L2138.91 718.57 L2141.07 721.73 L2143 718.16 L2145.37 721.42 L2147.63 718.69 L2149.96 721.53 L2152.09 718.15 L2154.02 721.68 L2155.69 720.06 L2157.28 721.62 L2159.33 720.21 L2161.51 720.92 L2163.75 718.25 L2165.89 720.69 L2168.25 718.75 L2170.62 721.68 L2172.21 720.32 L2173.9 721.35 L2175.81 718.59 L2177.98 721.7 L2179.84 718.98 L2181.68 721.66 L2183.72 719.45 L2185.83 721.21 L2188.2 717.85 L2189.77 720.89 L2191.91 719.67 L2193.52 721.23 L2195.34 718.44 L2197.67 721.34 L2199.43 719.1 L2201.55 720.85 L2203.57 719.67 L2205.38 720.78 L2207.34 720.36 L2209.22 721.51 L2211.32 720.29 L2213.06 721.68 L2214.99 717.74 L2216.98 721.34 L2219.32 720.24 L2221.14 720.83 L2222.65 718.36 L2224.47 721.78 L2226.2 719.22 L2228.04 721.18 L2229.59 719.89 L2231.97 721.27 L2233.89 720.26 L2235.64 720.65 L2237.76 719.08 L2239.31 721.33 L2241.51 719.28 L2243.54 720.72 L2245.62 718.72 L2247.16 721.77 L2249.35 719.34 L2251.64 720.81 L2253.96 719.44 L2256.36 720.89 L2258.66 720.08 L2260.86 721.29 L2263.24 717.72 L2264.93 721.29 L2266.68 719.18 L2268.44 721 L2270.05 720.03 L2271.96 721.71 L2273.8 717.99 L2276.1 721.56 L2277.62 718.18 L2279.98 721.08 L2281.6 719.84 L2283.93 720.67 L2285.46 719.98 L2287.35 721.48 L2289.52 719.46 L2291.72 721.62 L2293.69 717.77 L2295.82 721.69 L2297.42 718.7 L2299.26 721.36 L2301.19 718.87 L2303.56 721.51 L2305.57 719.76 L2307.56 720.92 L2309.18 719.15 L2311.31 721.79 L2313.51 719.33 L2315.46 721.07 L2317.68 720.34 L2319.63 721.75 L2321.47 719.53 L2322.99 721.44 L2324.9 718.67 L2327.23 721.36 L2329.21 718.5 L2331.55 720.66 L2333.94 719.66 L2335.59 720.68 L2337.16 719.24 L2339.32 721.17 L2341.17 717.91 L2342.94 721.14 L2345.19 720.11 L2347 721.21 L2349.01 719.92 L2350.92 721.73 L2352.5 719.54 L2354.13 720.64 L2354.7 720.91 L2356 637 L2357.3 720.91 L2357.5 720.91 L2358.8 554 L2360.1 720.91 L2361.87 721.33 L2363.7 720.75 L2365 639.5 L2366.3 720.75 L2367.57 717.99 L2369.23 721.64 L2370.78 718.43 L2372.78 721.79 L2374.32 718.19 L2376.26 720.75 L2377.8 718.85 L2378.2 720.93 L2379.5 638 L2380.8 720.93 L2381.46 718.79 L2382.5 720.66 L2383.8 604 L2385.1 720.66 L2386.87 721.69 L2387.4 721.69 L2388.7 629.6 L2390 721.69 L2390.51 720.73 L2392.66 720.31 L2394.74 720.79 L2396 721.44 L2397.3 632.7 L2398.2 721.44 L2399.5 689.7 L2400.8 721.44 L2401.55 720.72 L2403.47 720.06 L2405.16 721.48 L2406.2 721.48 L2407.5 635 L2408.8 721.48 L2409.09 721.38 L2410.67 719.31 L2412.73 721.02 L2414.38 720.11 L2416.32 720.98 L2418.23 718.89 L2420.55 721.63 L2422.29 719.12 L2422.5 720.72 L2423.8 430 L2424.2 720.86 L2425.5 712 L2426.8 720.86 L2428.15 720.86 L2430.4 719.68 L2432 721.49 L2433.82 718.01 L2435.56 721.04 L2437.63 717.82 L2439.24 720.88 L2441.04 720.21 L2443.11 720.79 L2445.14 720.36 L2447.51 721.34 L2449.58 718.47 L2451.32 721.31 L2453.11 720.23 L2454.67 720.94 L2456.54 718.06 L2458.1 721.44 L2459.76 717.86 L2461.97 720.72 L2463.93 720.21 L2465.8 721.53 L2467.33 718.92 L2469.09 721.67 L2471.05 717.89 L2473.4 721.24 L2474.99 718.35 L2476.59 721.16 L2478.17 717.74 L2480.16 721.28 L2481.9 718.96 L2484.28 721.29 L2485.97 719.06 L2488.29 721.34 L2488.5 721.34 L2488.5 745 Z" fill="#e5a7af"/>
<line x1="1403.5" y1="430.5" x2="2488.5" y2="430.5" stroke="#98a4af" stroke-opacity="0.45" stroke-width="1" stroke-dasharray="2 3"/>
<line x1="1403.5" y1="493.5" x2="2488.5" y2="493.5" stroke="#98a4af" stroke-opacity="0.45" stroke-width="1" stroke-dasharray="2 3"/>
<line x1="1403.5" y1="556.5" x2="2488.5" y2="556.5" stroke="#98a4af" stroke-opacity="0.45" stroke-width="1" stroke-dasharray="2 3"/>
<line x1="1403.5" y1="619.5" x2="2488.5" y2="619.5" stroke="#98a4af" stroke-opacity="0.45" stroke-width="1" stroke-dasharray="2 3"/>
<line x1="1403.5" y1="682.5" x2="2488.5" y2="682.5" stroke="#98a4af" stroke-opacity="0.45" stroke-width="1" stroke-dasharray="2 3"/>
<line x1="1448.5" y1="430" x2="1448.5" y2="745" stroke="#98a4af" stroke-opacity="0.45" stroke-width="1" stroke-dasharray="2 3"/>
<line x1="1573.5" y1="430" x2="1573.5" y2="745" stroke="#98a4af" stroke-opacity="0.45" stroke-width="1" stroke-dasharray="2 3"/>
<line x1="1698.5" y1="430" x2="1698.5" y2="745" stroke="#98a4af" stroke-opacity="0.45" stroke-width="1" stroke-dasharray="2 3"/>
<line x1="1823.5" y1="430" x2="1823.5" y2="745" stroke="#98a4af" stroke-opacity="0.45" stroke-width="1" stroke-dasharray="2 3"/>
<line x1="1948.5" y1="430" x2="1948.5" y2="745" stroke="#98a4af" stroke-opacity="0.45" stroke-width="1" stroke-dasharray="2 3"/>
<line x1="2073.5" y1="430" x2="2073.5" y2="745" stroke="#98a4af" stroke-opacity="0.45" stroke-width="1" stroke-dasharray="2 3"/>
<line x1="2198.5" y1="430" x2="2198.5" y2="745" stroke="#98a4af" stroke-opacity="0.45" stroke-width="1" stroke-dasharray="2 3"/>
<line x1="2323.5" y1="430" x2="2323.5" y2="745" stroke="#98a4af" stroke-opacity="0.45" stroke-width="1" stroke-dasharray="2 3"/>
<line x1="2448.5" y1="430" x2="2448.5" y2="745" stroke="#98a4af" stroke-opacity="0.45" stroke-width="1" stroke-dasharray="2 3"/>
<path d="M1403.5 721.05 L1403.7 721.05 L1405 690 L1406.3 721.05 L1408.02 720.91 L1410.35 720.42 L1412.26 720.67 L1414.35 717.98 L1415.95 721.24 L1417.67 718.98 L1419.69 721.78 L1421.38 719.72 L1423.71 720.88 L1425.35 718.27 L1426.98 721.06 L1428.59 720.5 L1430.88 721.55 L1432.57 717.75 L1432.7 721.45 L1434 700 L1435.3 721.45 L1437.22 718.99 L1438.7 721.55 L1440 633 L1441.3 721.55 L1441.68 718.57 L1444.05 720.73 L1444.7 721.63 L1446 601.6 L1447.3 721.63 L1447.47 721.63 L1449.02 719.66 L1451.07 721.8 L1453.18 719.55 L1454.96 720.82 L1456.89 719.62 L1458.82 720.95 L1460.37 717.77 L1461.89 720.9 L1464.15 720.45 L1466.36 721.36 L1468.38 720.47 L1469.93 721.58 L1472.29 719.95 L1474.47 720.68 L1476.81 719.54 L1478.63 721.17 L1480.83 720.2 L1483 720.84 L1485.28 720.4 L1487.63 721.69 L1489.44 718.79 L1491.76 721.39 L1494.09 718.97 L1495.88 721.42 L1497.53 720.28 L1499.17 720.97 L1501.57 720.05 L1503.11 720.62 L1505.09 719.36 L1506.8 721.09 L1509.05 719.22 L1510.93 721.73 L1513.25 720.41 L1515.2 720.79 L1516.81 718.45 L1519.17 721.04 L1521.38 720.2 L1523.27 721.62 L1525.53 719.67 L1527.44 720.6 L1529.7 717.77 L1531.61 721.21 L1533.77 719.16 L1535.53 721.32 L1537.16 719.44 L1539.55 720.65 L1541.62 719.1 L1543.42 721.69 L1545.17 718.31 L1547.45 721.37 L1549.65 718.33 L1551.78 721 L1553.96 719.48 L1556.1 721.46 L1558.03 718.34 L1560.16 721.45 L1562.51 718.68 L1564.53 721.79 L1566.52 719.8 L1568.63 721.24 L1570.86 718.69 L1573.08 721.38 L1575.16 718.43 L1577.4 721.38 L1579.66 718.06 L1581.78 720.63 L1584.14 719.05 L1586.12 721.6 L1588.2 720.97 L1589.5 714 L1589.7 720.97 L1591 708 L1591.2 720.97 L1592.5 714 L1593.8 720.97 L1594.1 720.86 L1596.13 718.64 L1598 721.05 L1600.2 718.72 L1602.35 721.77 L1603.99 719.27 L1606.08 721.54 L1608.2 718.73 L1609.73 721.23 L1611.44 720.35 L1613.06 721.42 L1614.72 719.96 L1616.25 721.24 L1618.1 718.79 L1620.13 721.51 L1622.44 720.5 L1624.31 721.47 L1626.17 720.18 L1628.42 721.35 L1629.95 718.78 L1631.54 721.15 L1633.35 718.87 L1635.71 720.82 L1637.59 718.22 L1639.66 721.36 L1641.29 718.83 L1643.3 720.65 L1645.67 718.8 L1647.49 720.73 L1648.99 720.2 L1651 721.06 L1652.62 718.74 L1654.92 721.35 L1656.81 719.87 L1658.58 720.63 L1660.42 717.81 L1662.74 721.09 L1664.47 717.75 L1666.42 721.3 L1668.21 717.74 L1670.15 721.46 L1672.08 720.16 L1674.14 721.27 L1675.9 718.31 L1678.15 721.78 L1680.13 719.73 L1682.47 720.86 L1684.19 719.75 L1685.83 720.61 L1687.59 718.8 L1689.52 721.03 L1691.56 718.42 L1693.17 720.89 L1694.94 719.01 L1696.74 721.44 L1698.72 719.2 L1700.54 720.91 L1702.58 720.4 L1704.3 721.25 L1706.63 718.01 L1708.62 721.78 L1710.82 719.3 L1712.84 720.95 L1714.91 719.15 L1717.23 721.34 L1719.08 718.11 L1720.76 721.44 L1723 720.32 L1725.26 720.97 L1727.15 719.7 L1729.35 720.71 L1730.98 719.16 L1732.97 721.2 L1734.77 720.07 L1736.8 720.83 L1738.36 719.86 L1740.6 720.85 L1742.69 720.43 L1744.84 720.63 L1747.24 718.54 L1748.79 720.79 L1750.48 718.69 L1752.84 720.95 L1754.46 719.68 L1756.79 721.62 L1758.84 719.34 L1760.48 721.05 L1762.02 720.2 L1763.86 721.71 L1765.41 718.89 L1767.58 720.75 L1769.2 719.29 L1770.99 721.08 L1772.93 717.87 L1774.76 721.73 L1776.89 720.08 L1778.96 721.19 L1781.28 718.95 L1783.34 721.48 L1785.33 719.79 L1787.51 721.18 L1789.13 719.84 L1790.96 720.92 L1792.63 718.5 L1794.71 721.7 L1796.82 720.24 L1798.43 721.09 L1800.14 718.04 L1802.08 721.41 L1804.29 720.42 L1806.44 721.74 L1808.08 717.83 L1810.19 721.53 L1811.8 717.78 L1813.9 720.82 L1815.52 718.75 L1817.34 721.52 L1819.14 718.78 L1820.95 721.34 L1822.58 718.17 L1824.66 720.83 L1826.55 718.12 L1828.52 721.09 L1830.53 718.43 L1832.39 721.68 L1833.92 719.93 L1835.45 720.73 L1837.39 718.37 L1838.89 721.24 L1841.19 718.77 L1843.07 721.24 L1844.66 720.07 L1846.31 721.35 L1848.15 718.04 L1849.79 721.5 L1851.54 720.05 L1853.3 721.52 L1855.23 720.41 L1857.56 721.36 L1859.91 718.57 L1862.02 721.23 L1864.37 720.17 L1866.47 721.45 L1868.57 718.46 L1870.22 721.56 L1871.74 719.85 L1873.31 721.32 L1875.69 719.48 L1877.47 721.24 L1879.23 718.45 L1881.37 721.6 L1883.09 718.62 L1885.44 721.02 L1887.32 717.77 L1888.83 721.73 L1891.03 719.35 L1892.57 721.14 L1894.96 719.05 L1896.78 721.69 L1898.34 717.98 L1900.28 720.68 L1901.83 719.82 L1903.38 721.32 L1904.93 719.78 L1906.8 721.43 L1908.34 720.39 L1910.72 721.58 L1912.68 719.37 L1914.65 721.7 L1916.44 720.2 L1918.42 720.69 L1920 721.78 L1921.3 685 L1922.6 721.78 L1924.14 719.14 L1926.15 721.35 L1928.22 718.47 L1930.54 721.43 L1932.44 718.19 L1933.9 721.66 L1935.2 548 L1936.5 721.66 L1938.12 720.82 L1938.7 721.51 L1940 703 L1941.3 721.51 L1941.48 721.51 L1943.05 719.3 L1943.7 721.51 L1945 708 L1946.3 721.51 L1946.63 718.54 L1948.17 721.56 L1949.93 719.45 L1951.52 721.3 L1953.3 718.39 L1955.3 720.72 L1957.39 718.37 L1959.4 721.27 L1961.64 718.66 L1964 720.93 L1966.13 719.75 L1968.36 721.34 L1969.98 720.32 L1971.63 721.48 L1973.74 719.7 L1975.3 720.88 L1977.3 720.42 L1978.84 721.64 L1980.66 718.09 L1983.02 721.07 L1984.73 719.3 L1986.55 721.4 L1988.06 718.86 L1990.31 720.93 L1991.89 719.02 L1993.55 720.95 L1995.45 717.87 L1997.67 721.66 L1999.45 717.94 L2001.37 721.28 L2003.26 718.35 L2005.61 721.16 L2007.98 718.83 L2009.57 720.82 L2011.45 720.35 L2013.83 721.76 L2015.85 719.15 L2018.14 721.33 L2019.84 719.72 L2021.52 721.13 L2023.34 718.4 L2025.06 721.38 L2026.78 717.75 L2029.04 720.78 L2031.09 719.38 L2032.72 720.8 L2034.66 720.39 L2036.31 721.68 L2038.46 717.98 L2040.14 720.84 L2041.93 718.59 L2044.21 721.05 L2046.43 719.45 L2047.94 721.19 L2049.97 719.98 L2051.82 721.42 L2053.34 719.63 L2055.18 721.23 L2057.32 719.38 L2059.7 720.82 L2062.03 718.56 L2064.14 721.16 L2066.36 719.48 L2068.39 720.98 L2070.36 719.7 L2071.93 721.7 L2073.75 718.87 L2075.93 720.94 L2077.71 717.9 L2079.46 720.94 L2081.02 718.39 L2083.12 720.65 L2085.43 718.57 L2087.69 720.91 L2089.74 719.92 L2091.7 720.72 L2093.42 717.77 L2095.41 721.33 L2096.91 719.41 L2098.57 721.02 L2100.88 717.95 L2102.93 721.34 L2104.53 718.57 L2106.53 720.94 L2108.36 718.02 L2110.05 721.43 L2111.8 718.76 L2114.1 721.6 L2116.17 718.35 L2117.87 721.72 L2119.88 718.18 L2122.17 720.93 L2124.05 719.31 L2126.03 720.71 L2127.8 719.71 L2129.84 720.64 L2131.51 720.41 L2133.12 721.12 L2135.16 719.99 L2136.83 721.09 L2138.91 718.57 L2141.07 721.73 L2143 718.16 L2145.37 721.42 L2147.63 718.69 L2149.96 721.53 L2152.09 718.15 L2154.02 721.68 L2155.69 720.06 L2157.28 721.62 L2159.33 720.21 L2161.51 720.92 L2163.75 718.25 L2165.89 720.69 L2168.25 718.75 L2170.62 721.68 L2172.21 720.32 L2173.9 721.35 L2175.81 718.59 L2177.98 721.7 L2179.84 718.98 L2181.68 721.66 L2183.72 719.45 L2185.83 721.21 L2188.2 717.85 L2189.77 720.89 L2191.91 719.67 L2193.52 721.23 L2195.34 718.44 L2197.67 721.34 L2199.43 719.1 L2201.55 720.85 L2203.57 719.67 L2205.38 720.78 L2207.34 720.36 L2209.22 721.51 L2211.32 720.29 L2213.06 721.68 L2214.99 717.74 L2216.98 721.34 L2219.32 720.24 L2221.14 720.83 L2222.65 718.36 L2224.47 721.78 L2226.2 719.22 L2228.04 721.18 L2229.59 719.89 L2231.97 721.27 L2233.89 720.26 L2235.64 720.65 L2237.76 719.08 L2239.31 721.33 L2241.51 719.28 L2243.54 720.72 L2245.62 718.72 L2247.16 721.77 L2249.35 719.34 L2251.64 720.81 L2253.96 719.44 L2256.36 720.89 L2258.66 720.08 L2260.86 721.29 L2263.24 717.72 L2264.93 721.29 L2266.68 719.18 L2268.44 721 L2270.05 720.03 L2271.96 721.71 L2273.8 717.99 L2276.1 721.56 L2277.62 718.18 L2279.98 721.08 L2281.6 719.84 L2283.93 720.67 L2285.46 719.98 L2287.35 721.48 L2289.52 719.46 L2291.72 721.62 L2293.69 717.77 L2295.82 721.69 L2297.42 718.7 L2299.26 721.36 L2301.19 718.87 L2303.56 721.51 L2305.57 719.76 L2307.56 720.92 L2309.18 719.15 L2311.31 721.79 L2313.51 719.33 L2315.46 721.07 L2317.68 720.34 L2319.63 721.75 L2321.47 719.53 L2322.99 721.44 L2324.9 718.67 L2327.23 721.36 L2329.21 718.5 L2331.55 720.66 L2333.94 719.66 L2335.59 720.68 L2337.16 719.24 L2339.32 721.17 L2341.17 717.91 L2342.94 721.14 L2345.19 720.11 L2347 721.21 L2349.01 719.92 L2350.92 721.73 L2352.5 719.54 L2354.13 720.64 L2354.7 720.91 L2356 637 L2357.3 720.91 L2357.5 720.91 L2358.8 554 L2360.1 720.91 L2361.87 721.33 L2363.7 720.75 L2365 639.5 L2366.3 720.75 L2367.57 717.99 L2369.23 721.64 L2370.78 718.43 L2372.78 721.79 L2374.32 718.19 L2376.26 720.75 L2377.8 718.85 L2378.2 720.93 L2379.5 638 L2380.8 720.93 L2381.46 718.79 L2382.5 720.66 L2383.8 604 L2385.1 720.66 L2386.87 721.69 L2387.4 721.69 L2388.7 629.6 L2390 721.69 L2390.51 720.73 L2392.66 720.31 L2394.74 720.79 L2396 721.44 L2397.3 632.7 L2398.2 721.44 L2399.5 689.7 L2400.8 721.44 L2401.55 720.72 L2403.47 720.06 L2405.16 721.48 L2406.2 721.48 L2407.5 635 L2408.8 721.48 L2409.09 721.38 L2410.67 719.31 L2412.73 721.02 L2414.38 720.11 L2416.32 720.98 L2418.23 718.89 L2420.55 721.63 L2422.29 719.12 L2422.5 720.72 L2423.8 430 L2424.2 720.86 L2425.5 712 L2426.8 720.86 L2428.15 720.86 L2430.4 719.68 L2432 721.49 L2433.82 718.01 L2435.56 721.04 L2437.63 717.82 L2439.24 720.88 L2441.04 720.21 L2443.11 720.79 L2445.14 720.36 L2447.51 721.34 L2449.58 718.47 L2451.32 721.31 L2453.11 720.23 L2454.67 720.94 L2456.54 718.06 L2458.1 721.44 L2459.76 717.86 L2461.97 720.72 L2463.93 720.21 L2465.8 721.53 L2467.33 718.92 L2469.09 721.67 L2471.05 717.89 L2473.4 721.24 L2474.99 718.35 L2476.59 721.16 L2478.17 717.74 L2480.16 721.28 L2481.9 718.96 L2484.28 721.29 L2485.97 719.06 L2488.29 721.34 L2488.5 721.34" fill="none" stroke="#d25a6c" stroke-width="1.25"/>
<rect x="1402" y="745" width="1088" height="6.4" fill="#a94253"/>
<rect x="1402" y="430" width="1.8" height="321.5" fill="#c64f60"/>
<rect x="2488.5" y="430" width="1.6" height="321.5" fill="#c97886"/>
<path d="M1402.9 430 V424" stroke="#c5ced3" stroke-width="1.5"/>
<path d="M1398.7 424.3 L1402.9 418.8 L1407.1 424.3 Z" fill="#fff" stroke="#c5ced3" stroke-width="1.3" stroke-linejoin="round"/>
<path d="M2490.1 745.6 H2495.1" stroke="#c5ced3" stroke-width="1.5"/>
<path d="M2495.1 741.6 L2501.6 745.6 L2495.1 749.6 Z" fill="#fff" stroke="#c5ced3" stroke-width="1.3" stroke-linejoin="round"/>
<rect x="20" y="781" width="12" height="5" fill="#820000"/>
<rect x="325" y="781" width="12" height="5" fill="#9c0000"/>
<rect x="597" y="781" width="12" height="5" fill="#b30012"/>
<rect x="888" y="781" width="12" height="5" fill="#d41a2e"/>
<rect x="1282" y="781" width="12" height="5" fill="#c00a20"/>
<rect x="1660" y="781" width="12" height="5" fill="#ff3a5a"/>
<rect x="2037" y="781" width="12" height="5" fill="#ff8296"/>
<g transform="translate(2463.5 833)" fill="#bac5cc"><rect x="-1.5" y="-8.9" width="3" height="4.5" transform="rotate(22.5)"/><rect x="-1.5" y="-8.9" width="3" height="4.5" transform="rotate(67.5)"/><rect x="-1.5" y="-8.9" width="3" height="4.5" transform="rotate(112.5)"/><rect x="-1.5" y="-8.9" width="3" height="4.5" transform="rotate(157.5)"/><rect x="-1.5" y="-8.9" width="3" height="4.5" transform="rotate(202.5)"/><rect x="-1.5" y="-8.9" width="3" height="4.5" transform="rotate(247.5)"/><rect x="-1.5" y="-8.9" width="3" height="4.5" transform="rotate(292.5)"/><rect x="-1.5" y="-8.9" width="3" height="4.5" transform="rotate(337.5)"/><circle r="6.2"/></g><circle cx="2463.5" cy="833" r="2.7" fill="#fff"/>
<circle cx="2488.9" cy="832.4" r="2.4" fill="#bac5cc"/>
<circle cx="2496.5" cy="832.4" r="2.4" fill="#bac5cc"/>
<circle cx="2503.9" cy="832.4" r="2.4" fill="#bac5cc"/>
</svg>
<div class="t " style="left:46px;top:422.62px;font-size:13.75px;transform:translateX(-100%);">20 %</div>
<div class="t " style="left:46px;top:485.62px;font-size:13.75px;transform:translateX(-100%);">16 %</div>
<div class="t " style="left:46px;top:548.62px;font-size:13.75px;transform:translateX(-100%);">12 %</div>
<div class="t " style="left:46px;top:611.62px;font-size:13.75px;transform:translateX(-100%);">8 %</div>
<div class="t " style="left:46px;top:674.62px;font-size:13.75px;transform:translateX(-100%);">4 %</div>
<div class="t " style="left:46px;top:737.62px;font-size:13.75px;transform:translateX(-100%);">0 %</div>
<div class="t " style="left:171.5px;top:756.62px;font-size:13.75px;transform:translateX(-50%);">3-14 01:17</div>
<div class="t " style="left:296.5px;top:756.62px;font-size:13.75px;transform:translateX(-50%);">3-14 06:24</div>
<div class="t " style="left:421.5px;top:756.62px;font-size:13.75px;transform:translateX(-50%);">3-14 11:30</div>
<div class="t " style="left:546.5px;top:756.62px;font-size:13.75px;transform:translateX(-50%);">3-14 16:37</div>
<div class="t " style="left:671.5px;top:756.62px;font-size:13.75px;transform:translateX(-50%);">3-14 21:44</div>
<div class="t " style="left:796.5px;top:756.62px;font-size:13.75px;transform:translateX(-50%);">3-15 02:50</div>
<div class="t " style="left:921.5px;top:756.62px;font-size:13.75px;transform:translateX(-50%);">3-15 07:57</div>
<div class="t " style="left:1046.5px;top:756.62px;font-size:13.75px;transform:translateX(-50%);">3-15 13:04</div>
<div class="t " style="left:1171.5px;top:756.62px;font-size:13.75px;transform:translateX(-50%);">3-15 18:11</div>
<div class="t " style="left:37.5px;top:777px;font-size:15px;">sas.analytium.co.uk: CPU guest nice time</div>
<div class="t " style="left:342.2px;top:777px;font-size:15px;">sas.analytium.co.uk: CPU guest time</div>
<div class="t " style="left:614.2px;top:777px;font-size:15px;">sas.analytium.co.uk: CPU interrupt time</div>
<div class="t " style="left:905.2px;top:777px;font-size:15px;">sas.analytium.co.uk: CPU iowait time</div>
<div class="t " style="left:1396.5px;top:422.62px;font-size:13.75px;transform:translateX(-100%);">403.08 Kbps</div>
<div class="t " style="left:1396.5px;top:485.62px;font-size:13.75px;transform:translateX(-100%);">322.46 Kbps</div>
<div class="t " style="left:1396.5px;top:548.62px;font-size:13.75px;transform:translateX(-100%);">241.85 Kbps</div>
<div class="t " style="left:1396.5px;top:611.62px;font-size:13.75px;transform:translateX(-100%);">161.23 Kbps</div>
<div class="t " style="left:1396.5px;top:674.62px;font-size:13.75px;transform:translateX(-100%);">80.62 Kbps</div>
<div class="t " style="left:1396.5px;top:737.62px;font-size:13.75px;transform:translateX(-100%);">0 bps</div>
<div class="t " style="left:1448.5px;top:756.62px;font-size:13.75px;transform:translateX(-50%);">3-13 22:28</div>
<div class="t " style="left:1573.5px;top:756.62px;font-size:13.75px;transform:translateX(-50%);">3-14 04:00</div>
<div class="t " style="left:1698.5px;top:756.62px;font-size:13.75px;transform:translateX(-50%);">3-14 09:31</div>
<div class="t " style="left:1823.5px;top:756.62px;font-size:13.75px;transform:translateX(-50%);">3-14 15:03</div>
<div class="t " style="left:1948.5px;top:756.62px;font-size:13.75px;transform:translateX(-50%);">3-14 20:34</div>
<div class="t " style="left:2073.5px;top:756.62px;font-size:13.75px;transform:translateX(-50%);">3-15 02:05</div>
<div class="t " style="left:2198.5px;top:756.62px;font-size:13.75px;transform:translateX(-50%);">3-15 07:37</div>
<div class="t " style="left:2323.5px;top:756.62px;font-size:13.75px;transform:translateX(-50%);">3-15 13:08</div>
<div class="t " style="left:2436.5px;top:756.62px;font-size:13.75px;transform:translateX(-50%);">3-15 18:40</div>
<div class="t " style="left:1299.2px;top:777px;font-size:15px;">sas.analytium.co.uk: Outgoing network traffic on e…</div>
<div class="t " style="left:1677.2px;top:777px;font-size:15px;">sas.analytium.co.uk: Outgoing network traffic on e…</div>
<div class="t " style="left:2054.2px;top:777px;font-size:15px;">sas.analytium.co.uk: Outgoing network traffic on vi…</div>
<div class="t " style="left:16px;top:866px;font-size:15px;color:#768d99">Time <span style="display:inline-block;width:0;height:0;border-left:5px solid transparent;border-right:5px solid transparent;border-top:8px solid #768d99;vertical-align:0px;margin-left:-1px"></span></div>
<div class="t " style="left:250px;top:866px;font-size:15px;color:#768d99">Action</div>
<div class="t " style="left:687px;top:866px;font-size:15px;color:#768d99">Type</div>
<div class="t " style="left:824.7px;top:866px;font-size:15px;color:#768d99">Recipient</div>
<div class="t " style="left:1138.3px;top:866px;font-size:15px;color:#768d99">Message</div>
<div class="t " style="left:2356.5px;top:866px;font-size:15px;color:#768d99">Status</div>
<div class="t " style="left:2441.5px;top:866px;font-size:15px;color:#768d99">Info</div>
<div style="position:absolute;left:3px;top:891px;width:2500px;height:3px;background:#dfe4e7;"></div>
<div class="t " style="left:16px;top:904px;font-size:15px;">2020-03-12 00:49:26</div>
<div class="t " style="left:250px;top:904px;font-size:15px;">Report problems to Zabbix administrators</div>
<div class="t " style="left:687px;top:904px;font-size:15px;">Twillio SMS</div>
<div class="t " style="left:824.7px;top:904px;font-size:15px;">vasnev (Vasilij Nevlev)</div>
<div class="t " style="left:824.7px;top:926px;font-size:15px;font-style:italic">Vasilij</div>
<div class="t " style="left:1138.3px;top:904px;font-size:15px;font-weight:bold">Resolved: Disk I/O is overloaded on sas.analytium.co.uk</div>
<div class="t " style="left:1138.3px;top:948px;font-size:15px;">Problem has been resolved at 00:49:26 on 2020.03.12</div>
<div class="t " style="left:1138.3px;top:970px;font-size:15px;">Problem name: Disk I/O is overloaded on sas.analytium.co.uk</div>
<div class="t " style="left:1138.3px;top:992px;font-size:15px;">Host: sas.analytium.co.uk</div>
<div class="t " style="left:1138.3px;top:1014px;font-size:15px;">Severity: Warning</div>
<div class="t " style="left:1138.3px;top:1058px;font-size:15px;">Original problem ID: 95999</div>
<div class="t red" style="left:2356.5px;top:904px;font-size:15px;">Failed</div>
<div style="position:absolute;left:2441px;top:902px;width:20px;height:20px;background:#d64e4e;border-radius:3px;box-shadow:inset 0 0 0 1px #cd3232"></div>
<div style="position:absolute;left:2449px;top:905px;width:3px;height:3px;background:#fff;"></div>
<div style="position:absolute;left:2449px;top:910px;width:3px;height:8px;background:#fff;"></div>
<div style="position:absolute;left:3px;top:1084px;width:2500px;height:1px;background:#ebeef0;"></div>
<div class="t " style="left:16px;top:1094px;font-size:15px;">2020-03-12 00:49:26</div>
<div class="t " style="left:250px;top:1094px;font-size:15px;">Report problems to Zabbix administrators</div>
<div class="t " style="left:687px;top:1094px;font-size:15px;">Twillio Call</div>
<div class="t " style="left:824.7px;top:1094px;font-size:15px;">vasnev (Vasilij Nevlev)</div>
<div class="t " style="left:1138.3px;top:1094px;font-size:15px;font-weight:bold">Resolved: Disk I/O is overloaded on sas.analytium.co.uk</div>
<div class="t red" style="left:2356.5px;top:1094px;font-size:15px;">Failed</div>
<div style="position:absolute;left:2441px;top:1093px;width:20px;height:20px;background:#d64e4e;border-radius:3px;box-shadow:inset 0 0 0 1px #cd3232"></div>
<div style="position:absolute;left:2449px;top:1096px;width:3px;height:3px;background:#fff;"></div>
<div style="position:absolute;left:2449px;top:1101px;width:3px;height:8px;background:#fff;"></div>
<div style="position:absolute;left:2504px;top:856px;width:8px;height:300px;background:#e8e8e8;"></div>
<div style="position:absolute;left:2504px;top:856px;width:8px;height:31px;background:#cdd5da;border:1px solid #bdc7cd"></div>
<svg width="20" height="30" style="position:absolute;left:1900px;top:850px"><path d="M6 7 V18 L8.6 15.4 L11.8 23.4 L14.2 22.6 L11.2 15 H14.2 Z" fill="#000"/></svg>
<div style="position:absolute;left:1880px;top:0px;width:1.5px;height:1.5px;background:#d5dbdf;"></div>
</body></html>
